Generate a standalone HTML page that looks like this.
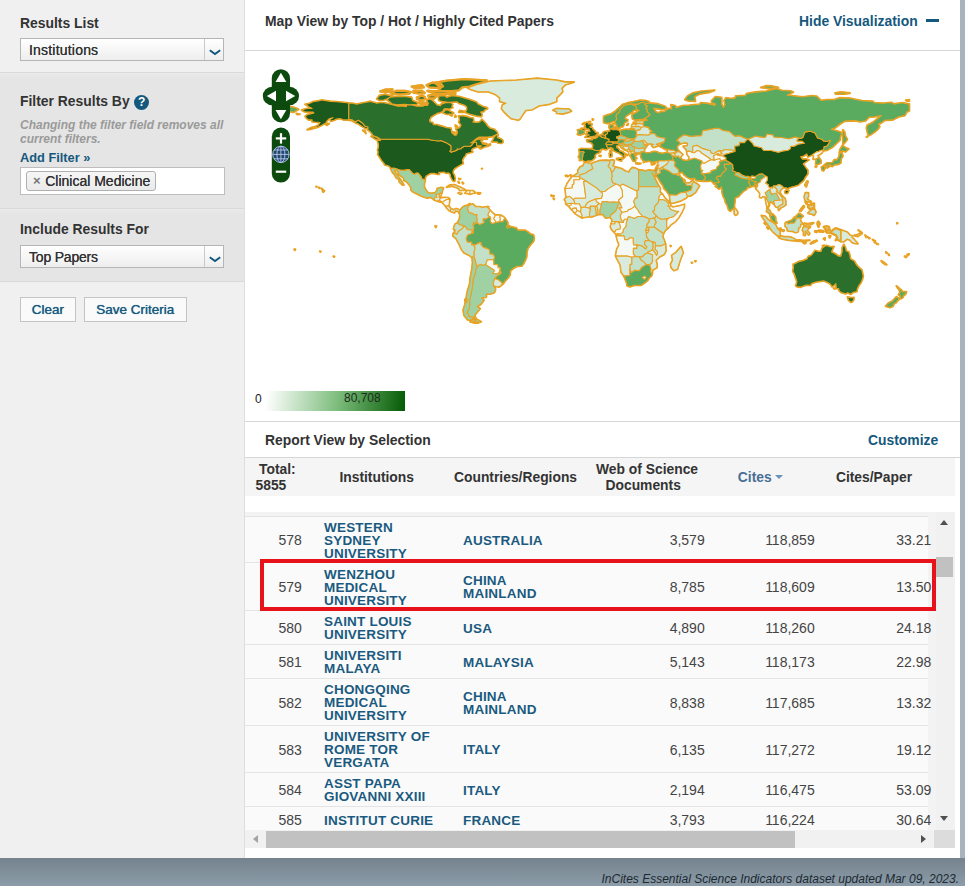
<!DOCTYPE html>
<html><head><meta charset="utf-8"><title>InCites Essential Science Indicators</title>
<style>
*{box-sizing:border-box;margin:0;padding:0}
html,body{width:965px;height:886px;overflow:hidden}
body{position:relative;font-family:"Liberation Sans",sans-serif;color:#333;background:linear-gradient(#74838e,#8c9ca8) 0 858px/965px 28px no-repeat,#a9b3bb;font-size:14px}
.abs{position:absolute}
#side{left:0;top:0;width:245px;height:858px;background:#f0f0f0;border-right:1px solid #dedede}
#main{left:245px;top:0;width:715px;height:858px;background:#fff}
.sec{left:0;width:244px;background:linear-gradient(#eaeaea,#e5e5e5 6px);border-top:1px solid #d9d9d9;border-bottom:1px solid #d9d9d9}
.h{font-weight:bold;font-size:13.9px;line-height:16px;color:#333;white-space:nowrap}
.sel{left:20px;width:204px;height:23px;border:1px solid #b5b5b5;background:linear-gradient(#fff,#eee);font-size:14px;line-height:23px;padding-left:8px;font-weight:normal;color:#333;text-shadow:0 0 0.4px #333}
.sel i{position:absolute;right:0;top:0;width:19px;height:21px;border-left:1px solid #c9c9c9}
.sel svg{position:absolute;left:3.5px;top:9.5px}
.btn{height:25px;border:1px solid #c4c4c4;background:#fafafa;color:#1a5a80;font-size:13.5px;line-height:24px;text-align:center;text-shadow:0 0 0.7px #1a5a80}
.blue{color:#15587e}
.hl{left:0;height:1px;background:#d6d6d6}
th,td{font-weight:normal}
.row{left:0;width:683px;border-bottom:1px solid #e4e4e4;background:#fafafa}
.row div{position:absolute;white-space:nowrap}
.th{font-weight:bold;font-size:13.85px;line-height:16px;color:#333;white-space:nowrap}
.num{font-size:14px;color:#444}
.lnk{font-weight:bold;font-size:13.5px;line-height:13px;color:#1a5a80;letter-spacing:0.2px}
</style></head><body>
<div id="side" class="abs">
 <div class="abs h" style="left:20px;top:14.5px">Results List</div>
 <div class="abs sel" style="top:38px;letter-spacing:0.2px">Institutions<i><svg width="12" height="7" viewBox="0 0 12 7"><path d="M0.8 1.2 L6 5 L11.2 1.2" fill="none" stroke="#15587e" stroke-width="2"/></svg></i></div>
 <div class="abs sec" style="top:72px;height:137px"></div>
 <div class="abs h" style="left:20px;top:93px">Filter Results By</div>
 <div class="abs" style="left:134px;top:95px;width:15.4px;height:15.4px;border-radius:50%;background:#15587e;color:#fff;font-weight:bold;font-size:12px;line-height:15px;text-align:center">?</div>
 <div class="abs" style="left:20px;top:118px;font-style:italic;font-size:12px;line-height:14px;color:#9a9a9a;white-space:nowrap;font-weight:bold">Changing the filter field removes all<br>current filters.</div>
 <div class="abs blue" style="left:20px;top:149.5px;font-weight:bold;font-size:12.8px;white-space:nowrap">Add Filter »</div>
 <div class="abs" style="left:20px;top:166.5px;width:205px;height:28px;background:#fff;border:1px solid #bdbdbd"></div>
 <div class="abs" style="left:26px;top:170.5px;width:129.5px;height:20px;border:1px solid #b0b0b0;border-radius:3px;background:linear-gradient(#f6f6f6,#eaeaea);font-size:14px;line-height:18px;white-space:nowrap;text-shadow:0 0 0.4px #333"><span class="abs" style="left:6px;top:0;color:#777;font-weight:bold;font-size:13px;text-shadow:none">×</span><span class="abs" style="left:18.2px;top:0">Clinical Medicine</span></div>
 <div class="abs sec" style="top:208px;height:74px"></div>
 <div class="abs h" style="left:20px;top:221px">Include Results For</div>
 <div class="abs sel" style="top:245px;letter-spacing:-0.2px">Top Papers<i><svg width="12" height="7" viewBox="0 0 12 7"><path d="M0.8 1.2 L6 5 L11.2 1.2" fill="none" stroke="#15587e" stroke-width="2"/></svg></i></div>
 <div class="abs btn" style="left:20px;top:297px;width:56px">Clear</div>
 <div class="abs btn" style="left:84px;top:297px;width:102.5px">Save Criteria</div>
</div>
<div id="main" class="abs">
 <div class="abs h" style="left:20px;top:13px">Map View by Top / Hot / Highly Cited Papers</div>
 <div class="abs h blue" style="left:554px;top:13px">Hide Visualization</div>
 <div class="abs" style="left:681px;top:18.5px;width:13px;height:3.5px;background:#15587e"></div>
 <div class="abs hl" style="top:50px;width:715px"></div>
 <!--MAP-->
<svg class="abs" style="left:0;top:51px" width="715" height="340" viewBox="0 0 715 340">
<path fill="none" stroke="#eba21f" stroke-width="2.1" stroke-linejoin="round" d="M327.0,125.7 334.8,125.7 334.8,124.0 340.4,122.2 343.7,119.9 347.9,117.8 346.9,114.7 346.2,112.7 340.7,111.5 339.5,111.7 338.1,114.7 335.2,115.9 332.9,119.1 333.1,121.7 329.9,124.3ZM320.1,137.7 327.3,137.0 327.3,134.0 329.0,133.1 329.0,128.7 334.8,128.7 334.8,125.7 327.0,125.7 324.2,129.6 322.1,132.8ZM334.8,125.7 334.8,126.5 341.6,130.5 352.1,137.4 355.8,141.1 357.3,140.7 360.5,140.2 363.1,137.9 371.0,133.1 367.5,131.4 366.6,127.9 367.3,125.2 366.6,121.3 365.7,118.2 363.1,115.0 364.5,112.9 365.0,109.6 360.5,109.4 355.2,109.6 350.0,111.3 346.2,112.7 346.9,114.7 347.9,117.8 343.7,119.9 340.4,122.2 334.8,124.0ZM365.0,109.6 364.5,112.9 363.1,115.0 365.7,118.2 366.6,121.3 367.8,120.8 370.1,117.3 370.3,116.1 367.8,114.7 368.9,112.0 369.2,109.4 367.1,108.9ZM366.6,121.3 367.3,125.2 366.6,127.9 367.5,131.4 371.0,133.1 374.8,134.7 377.9,133.3 391.9,140.2 391.9,139.3 393.6,139.3 393.6,135.8 393.6,118.9 390.2,117.1 387.5,116.6 384.9,119.1 384.0,121.2 380.6,120.3 376.7,117.7 372.7,116.6 370.3,116.1 370.1,117.3 367.8,120.8ZM393.6,118.9 393.6,135.8 405.0,135.8 414.4,135.8 412.3,132.4 409.7,127.0 406.9,121.9 409.7,125.7 410.9,122.6 409.9,119.4 406.4,119.6 404.1,118.9 400.6,120.1 397.1,119.2ZM393.6,135.8 414.4,135.8 415.3,137.5 415.0,141.1 417.2,142.8 414.6,144.6 413.7,148.1 413.7,149.3 413.0,152.1 411.3,153.7 409.5,156.0 409.5,159.5 407.6,160.4 411.6,165.0 409.4,167.1 404.1,168.0 401.5,166.6 397.8,165.5 394.0,161.3 392.8,159.0 391.0,156.9 389.8,155.1 389.3,152.0 388.4,150.7 390.2,146.9 391.9,146.9 391.9,140.2 391.9,139.3 393.6,139.3ZM413.7,148.1 414.6,144.6 417.2,142.8 419.8,147.0 425.3,152.1 424.0,152.7 419.8,149.2 416.2,148.5 413.7,149.3ZM413.7,149.3 416.2,148.5 419.8,149.2 424.0,152.7 423.0,155.1 424.9,155.3 425.1,157.8 426.8,158.7 432.1,160.4 433.8,160.4 428.6,165.7 423.3,167.3 421.6,167.6 419.0,168.3 416.3,168.2 412.9,166.8 411.6,165.0 407.6,160.4 409.5,159.5 409.5,156.0 411.3,153.7 413.0,152.1ZM423.0,155.1 424.0,152.7 425.3,152.1 425.6,154.3 424.9,155.3ZM424.9,155.3 425.6,154.3 427.7,156.2 431.2,155.5 435.6,154.6 439.4,153.4 439.2,156.2 437.3,160.4 433.8,166.6 430.3,170.6 426.0,173.6 422.6,177.5 421.6,175.9 421.6,169.6 423.3,167.3 428.6,165.7 433.8,160.4 432.1,160.4 426.8,158.7 425.1,157.8ZM409.4,167.1 411.6,165.0 412.9,166.8 416.3,168.2 419.0,168.3 421.6,167.6 421.6,169.6 421.6,175.9 422.6,177.5 420.2,179.4 418.4,182.8 415.8,180.7 409.4,176.3 409.4,174.1 411.1,171.5ZM404.1,168.0 409.4,167.1 411.1,171.5 409.4,174.1 409.4,176.3 403.3,176.3 401.7,177.0 401.9,173.4 404.1,170.6ZM403.3,176.3 409.4,176.3 415.8,180.7 418.4,182.8 417.7,185.9 419.0,188.6 420.5,193.0 415.5,195.1 410.6,194.7 410.1,191.6 407.3,190.9 404.1,189.6 401.5,185.9 401.3,182.2 403.3,180.7 403.8,178.7ZM400.5,178.7 401.7,177.0 403.3,176.3 403.8,178.7 402.2,179.4ZM400.6,179.4 402.2,179.4 403.8,178.7 403.3,180.7 401.3,182.2ZM371.3,184.9 372.7,182.6 375.1,183.1 377.8,181.4 378.3,178.4 380.9,175.4 381.4,171.0 382.5,168.3 382.5,166.8 384.0,165.5 389.3,167.3 392.8,165.5 397.8,165.5 401.5,166.6 404.1,168.0 404.1,170.6 401.9,173.4 401.7,177.0 400.5,178.7 400.6,179.4 401.3,182.2 401.5,185.9 404.1,189.6 400.5,189.5 399.6,190.9 399.9,193.9 402.0,195.8 400.6,198.1 397.5,195.3 394.2,194.2 392.6,194.6 391.9,193.7 388.8,194.2 388.1,191.2 388.2,187.3 384.9,186.8 383.2,188.6 379.7,188.6 379.0,184.9 372.7,184.9ZM369.4,181.4 371.0,183.3 372.7,182.6 375.1,183.1 377.8,181.4 378.3,178.4 380.9,175.4 381.4,171.0 382.5,168.3 379.2,168.3 378.3,171.5 373.0,170.6 374.3,172.4 375.3,175.6 375.1,177.8 371.8,178.5 371.0,178.7ZM366.2,172.7 369.7,172.7 369.7,170.5 373.0,170.6 374.3,172.4 375.3,175.6 375.1,177.8 371.8,178.5 371.0,178.7 369.4,181.4 366.8,178.7 365.4,175.7ZM366.2,172.7 367.1,170.5 369.7,170.5 369.7,172.7ZM364.8,166.2 366.9,168.3 367.1,170.5 373.0,170.6 378.1,171.5 376.2,168.3 375.3,164.8 377.1,161.3 374.1,156.9 377.1,156.9 374.8,151.6 373.0,154.3 371.0,159.4 368.3,162.2 366.2,163.2ZM376.2,168.3 375.3,164.8 377.1,161.3 382.5,160.2 383.2,158.7 386.7,157.4 389.8,155.1 391.0,156.9 392.8,159.0 394.0,161.3 397.8,165.5 392.8,165.5 389.3,167.3 384.0,165.5 382.5,166.8 382.5,168.3 379.2,168.3 378.1,171.5ZM374.8,151.6 377.1,156.9 374.1,156.9 377.1,161.3 382.5,160.2 383.2,158.7 386.7,157.4 389.8,155.1 389.3,152.0 388.4,150.7 390.2,146.9 391.9,146.9 391.9,140.2 377.9,133.3 374.8,134.7 376.2,137.5 377.1,139.3 377.6,145.5 373.6,149.0 373.7,150.7ZM350.3,148.1 352.3,147.6 356.1,147.4 357.3,144.9 357.3,140.7 360.5,140.2 363.1,137.9 371.0,133.1 374.8,134.7 376.2,137.5 377.1,139.3 377.6,145.5 373.6,149.0 373.7,150.7 371.8,151.4 368.3,151.1 364.0,151.3 361.3,150.6 357.3,150.6 356.3,153.9 354.9,152.9 353.8,152.3 351.6,150.7ZM354.7,163.2 354.9,158.7 356.3,153.9 357.3,150.6 361.3,150.6 364.0,151.3 368.3,151.1 371.8,151.4 373.7,150.7 374.8,151.6 373.0,154.3 371.0,159.4 368.3,162.2 366.2,163.2 364.8,166.2 362.2,166.8 360.5,166.9 357.9,163.4ZM352.8,163.6 354.7,163.2 354.9,158.7 356.3,153.9 354.9,152.9 353.8,152.3 351.6,155.1 352.8,158.7ZM352.1,163.8 352.8,163.6 352.8,158.7 351.6,155.1 349.8,155.0 350.9,159.5 351.0,162.4ZM344.6,165.5 346.5,166.1 352.1,163.8 351.0,162.4 350.9,159.5 349.8,155.0 345.1,155.1 345.3,157.8 344.4,162.5ZM340.4,156.2 345.1,157.4 345.1,155.1 349.8,155.0 351.6,155.1 353.8,152.3 351.6,150.7 350.3,148.1 346.5,149.5 342.7,151.3 340.7,153.7ZM336.9,166.8 344.6,165.5 344.4,162.5 345.3,157.8 345.1,157.4 340.4,156.2 339.2,155.8 336.0,156.5 335.5,161.1 336.9,164.3ZM329.9,162.4 336.9,166.8 336.9,164.3 335.5,161.1 333.6,159.7 332.0,159.5ZM326.8,158.7 329.9,162.4 332.0,159.5 331.3,156.9 328.2,157.1ZM323.8,155.3 326.8,158.7 328.2,157.1 331.3,156.9 332.0,159.5 333.6,159.7 335.5,161.1 336.0,156.5 335.5,155.1 334.3,152.7 330.1,152.7 326.1,152.3 326.1,153.9ZM320.8,152.9 323.8,155.3 326.1,153.9 326.1,152.3ZM320.8,152.9 326.1,152.3 330.1,152.7 328.7,148.6 324.7,145.3 321.2,146.3 319.4,148.6 320.8,150.6ZM320.1,137.7 321.2,146.3 324.7,145.3 328.7,148.6 329.9,147.2 340.4,147.2 340.7,145.8 338.7,130.5 341.6,130.5 334.8,126.5 334.8,128.7 329.0,128.7 329.0,133.1 327.3,134.0 327.3,137.0ZM328.7,148.6 330.1,152.7 334.3,152.7 335.5,155.1 336.0,156.5 339.2,155.8 340.4,156.2 340.7,153.7 342.7,151.3 346.5,149.5 350.3,148.1 352.3,147.6 356.1,147.4 357.3,144.9 357.3,140.7 355.8,141.1 352.1,137.4 341.6,130.5 338.7,130.5 340.7,145.8 340.4,147.2 329.9,147.2ZM371.3,184.9 372.7,184.9 379.0,184.9 379.7,188.6 383.2,188.6 384.9,186.8 388.2,187.3 388.1,191.2 388.8,194.2 391.9,193.7 391.9,197.4 388.4,197.4 388.4,203.0 390.9,205.5 386.7,206.2 382.3,205.1 374.4,205.1 370.6,204.9 371.8,198.3 374.1,193.9 372.7,190.3ZM388.4,197.4 391.9,197.4 391.9,193.7 392.6,194.6 394.2,194.2 397.5,195.3 400.6,198.1 402.0,195.8 399.9,193.9 399.6,190.9 400.5,189.5 404.1,189.6 407.3,190.9 408.1,193.5 408.1,196.5 407.1,198.4 408.0,199.1 402.7,200.9 403.1,202.0 400.5,202.7 397.1,206.0 394.2,205.8 390.9,205.5 388.4,203.0ZM407.3,190.9 410.1,191.6 410.6,194.7 410.2,198.3 412.5,200.2 412.5,203.0 411.5,204.4 409.9,201.8 408.0,199.1 407.1,198.4 408.1,196.5 408.1,193.5ZM420.5,193.0 420.9,200.0 419.0,203.5 414.6,205.8 410.9,209.3 412.0,213.2 411.8,216.7 407.6,219.0 407.4,221.7 405.9,221.7 405.7,219.9 405.9,217.6 404.6,213.9 406.7,212.0 407.6,209.3 407.3,206.2 407.6,203.9 403.1,202.0 402.7,200.9 408.0,199.1 409.9,201.8 411.5,204.4 412.5,203.0 412.5,200.2 410.2,198.3 410.6,194.7 415.5,195.1ZM394.2,205.8 397.1,206.0 400.5,202.7 403.1,202.0 407.6,203.9 407.3,206.2 407.6,209.3 406.7,212.0 404.6,213.9 401.3,213.6 398.4,210.6 395.7,208.8ZM384.9,213.2 384.9,218.1 386.3,221.7 389.6,219.4 394.5,219.7 397.1,216.2 401.3,213.6 398.4,210.6 395.7,208.8 394.2,205.8 390.9,205.5 386.7,206.2 386.7,213.2ZM370.6,204.9 374.4,205.1 382.3,205.1 386.7,206.2 386.7,213.2 384.9,213.2 384.9,218.1 384.9,224.5 380.6,225.0 378.8,224.8 376.2,221.1 375.3,214.1 371.8,207.6ZM378.8,224.8 380.6,225.0 384.9,224.5 384.9,218.1 386.3,221.7 389.6,219.4 394.5,219.7 397.1,216.2 401.3,213.6 404.6,213.9 405.9,217.6 405.7,219.9 405.9,221.7 407.4,221.7 406.6,224.7 404.1,227.1 402.4,229.6 399.2,232.2 396.3,234.0 394.5,234.3 389.3,234.3 384.9,235.7 382.1,234.7 381.8,232.1 380.2,228.2ZM397.1,226.6 399.8,225.0 401.3,226.4 399.4,228.4ZM436.1,195.6 438.2,201.8 437.0,204.4 434.7,210.6 432.4,218.3 428.9,219.4 426.3,216.7 425.6,213.2 427.7,209.3 426.8,204.4 430.3,202.1 433.8,198.3ZM307.6,144.9 309.0,144.8 308.4,145.6ZM308.4,147.7 309.3,147.7 309.0,148.3ZM306.0,144.4 306.5,144.4 306.4,144.9ZM425.4,194.6 426.0,194.9 425.6,195.4ZM450.0,209.9 450.9,210.1 450.4,210.6ZM446.6,211.5 447.4,211.6 446.9,212.0ZM435.6,92.8 433.8,90.5 431.7,89.5 432.1,89.1 434.7,86.5 439.0,83.7 446.0,85.4 452.1,84.7 456.5,84.7 457.4,79.8 463.5,78.6 470.5,77.2 474.0,77.3 478.3,79.5 484.4,80.3 489.7,85.1 494.9,84.7 498.4,86.5 502.4,88.1 499.3,91.8 494.9,91.4 494.0,94.8 489.7,95.3 490.2,100.2 487.9,99.2 479.2,98.5 478.3,99.9 474.0,99.7 470.5,101.6 468.7,102.7 466.1,102.0 465.2,99.7 458.3,97.9 452.1,94.4 447.8,95.3 447.8,101.8 444.3,100.1 441.7,100.9 441.7,99.2 439.0,96.2 438.2,95.3 442.5,94.8 442.5,92.1 439.0,91.8ZM447.8,101.8 447.8,95.3 452.1,94.4 458.3,97.9 465.2,99.7 466.1,102.0 468.7,102.7 470.5,101.6 474.0,99.7 477.5,102.7 474.0,103.7 473.1,102.5 470.0,104.1 468.4,105.3 469.3,107.6 467.9,109.0 466.1,108.7 462.6,106.0 458.3,103.2 456.5,102.0 454.8,100.2 452.1,99.5 449.5,101.8ZM441.7,100.9 444.3,100.1 447.8,101.8 449.5,101.8 452.1,99.5 454.8,100.2 456.5,102.0 458.3,103.2 462.6,106.0 466.1,108.7 462.6,110.6 459.1,112.4 456.9,111.8 456.9,110.1 453.0,108.5 449.5,107.3 444.3,108.9 444.1,105.9 442.5,104.1ZM472.2,104.1 478.3,105.2 479.2,103.6 484.1,102.3 490.0,100.4 487.9,99.2 479.2,98.5 478.3,99.9 474.0,99.7 477.5,102.7 474.0,103.7ZM467.9,109.0 469.3,107.6 468.4,105.3 470.0,104.1 473.1,102.5 472.2,104.1 478.3,105.2 481.0,106.7 480.8,108.9 475.7,109.7 474.8,107.8 472.2,108.3 468.7,109.4ZM412.7,111.3 414.1,109.7 416.3,109.7 419.8,109.7 424.0,109.2 421.9,113.3 417.7,115.9 414.3,117.7 412.5,116.6 412.9,113.6ZM424.0,109.2 428.2,109.0 430.3,111.5 429.4,114.7 433.5,118.5 433.8,121.7 434.7,121.9 431.2,123.3 428.0,123.1 423.3,119.8 418.4,117.8 417.7,115.9 421.9,113.3ZM428.2,104.6 430.7,106.0 433.8,104.8 435.4,106.9 437.3,108.7 440.8,109.7 444.3,108.9 449.5,107.3 453.0,108.5 456.9,110.1 456.9,111.8 455.6,114.7 456.2,119.1 457.9,119.2 456.3,122.1 459.6,124.9 460.5,126.6 460.3,127.7 457.6,130.1 451.3,129.4 449.5,127.0 445.2,127.7 441.7,125.9 438.7,123.5 437.3,121.3 434.7,121.9 433.8,121.7 433.5,118.5 429.4,114.7 430.3,111.5 428.2,109.0 427.3,106.9ZM411.1,122.8 412.9,123.1 415.5,121.7 414.6,119.1 418.4,117.8 423.3,119.8 428.0,123.1 431.2,123.3 432.9,124.3 434.5,124.3 435.6,126.1 437.6,127.5 438.7,130.9 440.1,131.7 441.8,134.2 446.4,134.5 447.3,135.8 446.0,139.3 440.8,141.1 435.6,141.8 434.2,142.5 431.2,144.2 426.8,143.9 425.6,143.7 424.7,145.6 424.2,143.7 421.6,140.2 419.0,137.5 418.1,134.9 416.3,132.3 415.0,130.5 413.7,127.9 411.5,125.2ZM431.2,123.3 433.8,121.7 434.5,124.3 432.9,124.3ZM438.7,130.9 439.4,128.6 440.1,130.1 440.1,131.2ZM424.7,145.6 425.6,143.7 426.8,143.9 431.2,144.2 434.2,142.5 435.6,141.8 440.8,141.1 442.5,145.3 441.1,147.0 435.6,149.9 428.6,152.0 426.0,152.1 425.4,151.1ZM440.8,141.1 446.0,139.3 447.3,135.8 446.4,134.5 447.8,131.9 448.3,130.7 452.3,133.0 454.4,134.9 452.1,138.6 450.7,141.1 448.6,142.8 446.0,144.6 442.5,145.3ZM440.1,131.7 441.8,134.2 446.4,134.5 447.8,131.9 448.3,130.7 448.0,128.7 445.2,131.7 444.3,132.1ZM411.1,122.8 412.9,123.1 415.5,121.7 414.6,119.1 418.4,117.8 417.7,115.9 414.3,117.7 412.5,116.6 412.2,116.9 412.0,119.1ZM409.9,119.4 410.9,122.6 412.0,119.1 412.2,116.9 412.2,116.1 411.3,116.2ZM411.3,116.2 412.2,116.1 413.9,114.3 412.9,113.6ZM456.9,111.8 459.1,112.4 462.6,110.6 466.1,108.7 467.9,109.0 468.7,109.4 472.2,108.3 474.8,107.8 475.7,109.7 480.8,108.9 478.3,109.6 474.3,111.1 474.8,113.8 472.2,115.9 471.0,118.4 466.1,119.9 465.8,121.9 459.1,122.8 456.3,122.1 457.9,119.2 456.2,119.1 455.6,114.7ZM457.6,130.1 460.3,127.7 460.5,126.6 459.6,124.9 456.3,122.1 459.1,122.8 465.8,121.9 466.1,119.9 471.0,118.4 472.2,115.9 474.8,113.8 474.3,111.1 478.3,109.6 480.8,108.9 481.8,109.7 485.8,112.0 484.1,113.4 479.2,113.4 479.9,116.8 481.5,117.7 480.1,119.9 477.5,121.9 475.5,125.4 472.7,125.2 471.3,127.0 473.6,129.3 474.0,131.6 470.1,131.7 469.1,132.8 467.5,131.0 466.1,129.8 462.6,130.1ZM469.1,132.8 470.1,131.7 474.0,131.6 473.6,129.3 471.3,127.0 472.7,125.2 475.5,125.4 477.5,121.9 480.1,119.9 481.5,117.7 479.9,116.8 479.2,113.4 484.1,113.4 485.8,112.0 487.9,114.1 487.8,116.4 488.5,117.3 487.4,119.4 491.4,121.3 490.0,123.8 494.9,126.3 498.4,127.5 503.8,128.0 503.8,125.4 505.2,126.5 506.8,127.5 510.6,127.2 510.1,125.6 514.1,123.1 517.6,122.8 519.9,124.7 519.4,126.6 516.2,128.4 515.2,131.0 512.9,132.3 512.7,135.4 511.7,136.0 511.3,133.1 509.8,134.0 509.2,132.3 511.3,130.5 506.8,130.0 506.8,128.7 504.9,128.0 503.8,131.4 505.2,133.7 505.4,136.1 501.9,136.8 501.6,138.4 498.4,140.2 495.4,143.3 493.5,145.5 490.2,146.7 489.9,150.7 489.3,154.3 489.3,156.4 487.9,158.1 486.5,158.8 485.3,160.2 483.6,158.7 482.3,154.3 480.6,151.6 479.7,148.1 478.3,145.5 477.1,141.1 477.1,137.5 476.1,137.2 476.6,135.8 474.0,137.9 470.5,135.3 472.2,134.4ZM490.0,123.8 491.4,121.3 494.0,121.7 496.7,123.8 500.2,125.2 503.8,125.4 503.8,128.0 498.4,127.5 494.9,126.3ZM505.2,126.5 506.8,124.9 510.1,125.6 510.6,127.2 506.8,127.5ZM503.8,131.4 504.9,128.0 506.8,128.7 506.8,130.0 511.3,130.5 509.2,132.3 509.8,134.0 511.3,133.1 511.7,137.0 511.2,138.1 510.3,135.3 508.0,134.9 505.4,136.1 505.2,133.7ZM489.3,157.6 490.2,157.4 492.8,161.3 492.3,163.2 490.6,164.1 489.5,163.1 489.3,160.4ZM478.5,105.2 479.2,103.6 484.1,102.3 490.0,100.4 490.2,100.2 489.7,95.3 494.0,94.8 494.9,91.4 499.3,91.8 502.4,88.1 503.3,88.1 508.0,92.7 508.9,94.8 516.7,96.7 518.5,99.3 526.3,99.5 533.3,101.3 537.7,99.9 542.9,99.3 545.4,97.6 545.6,95.3 549.0,95.3 553.4,93.0 559.3,92.3 556.9,90.2 552.5,90.4 551.7,89.7 553.8,86.9 555.7,87.4 557.8,86.5 559.5,82.1 560.4,80.9 565.6,80.3 570.0,82.1 572.6,86.9 577.0,88.3 578.4,90.0 581.3,90.5 585.7,89.3 582.2,95.1 579.2,95.7 578.7,98.8 578.2,100.1 577.3,99.0 573.5,100.6 571.6,100.9 567.2,103.9 563.0,105.9 561.8,102.9 558.6,105.0 555.7,105.9 557.6,108.3 560.9,108.0 563.9,108.9 560.4,111.1 558.1,112.9 560.9,116.8 562.8,119.1 562.7,121.7 562.8,122.9 560.4,126.1 558.6,129.4 556.0,131.6 553.4,134.0 549.4,135.3 546.4,136.1 542.9,137.2 542.6,138.8 541.5,136.7 538.6,136.7 536.3,134.4 533.9,133.5 531.2,134.7 528.4,135.1 527.7,137.2 526.5,136.3 524.6,136.5 523.2,135.6 523.4,133.8 520.4,132.3 522.3,128.9 522.2,125.9 519.9,124.7 517.6,122.8 514.1,123.1 510.1,125.6 506.8,124.9 505.2,126.5 503.8,125.4 500.2,125.2 496.7,123.8 494.0,121.7 491.4,121.3 487.4,119.4 488.5,117.3 487.8,116.4 487.9,114.1 485.8,112.0 481.8,109.7 480.8,108.9 481.0,106.7ZM539.8,140.7 541.2,139.1 543.8,139.5 542.6,142.1 540.3,142.3ZM559.9,134.0 562.1,130.1 563.0,130.5 561.3,135.8ZM503.3,88.1 510.6,85.1 520.2,86.5 522.0,83.0 528.1,84.0 529.0,86.0 536.8,86.5 543.8,87.7 549.9,86.1 553.8,86.9 551.7,89.7 552.5,90.4 556.9,90.2 559.3,92.3 553.4,93.0 549.0,95.3 545.6,95.3 545.4,97.6 542.9,99.3 537.7,99.9 533.3,101.3 526.3,99.5 518.5,99.3 516.7,96.7 508.9,94.8 508.0,92.7ZM567.2,103.9 571.6,100.9 573.5,100.6 577.3,99.0 578.2,100.1 576.5,102.3 572.6,104.6 574.0,106.6 571.2,108.0 568.2,108.1 568.8,105.0ZM571.2,108.0 574.0,106.6 575.9,109.4 575.9,112.0 573.5,113.1 570.9,114.0 570.7,112.0 571.2,109.4ZM570.3,115.7 571.6,115.5 570.9,116.1ZM578.6,114.7 580.5,113.1 582.2,112.0 587.5,111.7 589.2,108.9 591.8,108.9 593.6,106.7 594.4,104.1 594.4,102.7 596.7,101.6 597.9,105.0 596.2,107.6 595.8,110.3 595.8,111.8 594.1,112.9 592.2,113.4 589.2,113.6 588.9,114.1 587.1,115.5 585.7,113.8 582.2,114.1 580.5,115.0ZM594.4,101.5 595.0,98.5 597.4,94.6 600.6,96.7 603.7,97.9 600.6,100.6 597.1,99.9ZM576.5,116.1 578.7,114.8 580.3,116.8 578.7,119.6 577.3,119.4ZM580.8,115.5 584.0,114.1 584.8,115.2 582.2,116.8ZM511.2,138.1 511.7,137.0 511.7,136.0 512.7,135.4 512.9,132.3 515.2,131.0 516.2,128.4 519.4,126.6 519.9,124.7 522.2,125.9 522.3,128.9 520.4,132.3 523.4,133.8 523.2,135.6 524.6,136.5 526.5,136.3 524.8,138.6 522.7,139.8 520.2,141.9 521.5,144.6 522.2,146.0 521.5,147.7 523.0,150.7 523.9,153.7 522.2,156.9 521.5,153.4 520.6,149.0 520.4,145.8 518.0,145.5 516.4,146.7 514.6,146.3 515.0,142.8 513.4,140.2ZM520.2,141.9 522.7,139.8 524.8,138.6 525.5,140.2 526.7,143.7 528.3,142.5 531.6,142.3 533.0,145.5 534.2,147.2 534.2,149.2 529.8,149.5 528.8,150.7 529.7,153.9 527.7,152.1 526.2,150.9 524.6,150.9 524.4,154.3 523.2,156.4 523.2,158.3 525.1,159.9 525.5,161.8 527.7,163.1 528.3,163.6 526.5,164.5 524.9,163.1 524.1,162.4 521.6,160.4 522.2,156.9 523.9,153.7 523.0,150.7 521.5,147.7 522.2,146.0 521.5,144.6ZM524.8,138.6 526.5,136.3 527.7,137.2 528.4,135.1 529.7,136.3 531.6,137.7 532.6,140.0 531.4,140.5 533.7,141.9 535.9,144.6 537.9,147.6 537.7,148.8 535.1,149.2 534.2,149.2 534.2,147.2 533.0,145.5 531.6,142.3 528.3,142.5 526.7,143.7 525.5,140.2ZM528.4,135.1 531.2,134.7 533.9,133.5 536.3,134.4 538.6,136.7 536.3,138.2 534.7,141.1 535.9,143.3 537.3,144.9 540.0,147.6 540.8,150.7 540.7,153.9 537.7,156.0 536.5,156.2 533.7,159.2 533.2,156.7 532.5,156.2 535.1,154.3 537.7,152.9 537.7,148.8 537.9,147.6 535.9,144.6 533.7,141.9 531.4,140.5 532.6,140.0 531.6,137.7 529.7,136.3ZM528.8,150.7 529.8,149.5 534.2,149.2 535.1,149.2 537.7,148.8 537.7,152.9 535.1,154.3 532.5,156.2 530.7,155.8 529.7,153.9ZM524.9,163.1 526.5,164.5 528.3,163.6 530.5,166.1 530.7,169.6 531.9,172.0 530.7,172.2 526.9,169.4 525.8,167.1 525.1,164.8ZM541.4,171.2 542.9,172.9 545.9,172.0 548.9,172.2 550.4,170.5 551.8,167.1 555.2,167.1 556.0,166.9 558.1,165.2 555.5,163.2 553.9,162.4 551.7,164.8 549.0,166.6 547.3,168.9 544.3,170.1ZM540.3,174.0 540.3,171.9 541.4,171.2 542.9,172.9 545.9,172.0 548.9,172.2 550.4,170.5 551.8,167.1 555.2,167.1 556.0,166.9 555.3,168.3 556.0,170.6 557.8,172.7 555.7,173.1 555.2,175.9 553.4,177.1 553.4,179.8 552.5,181.2 550.1,181.5 547.3,180.1 545.0,180.3 542.4,179.6 542.1,177.1 540.3,175.4ZM516.4,164.6 520.2,165.3 522.3,167.8 525.1,170.1 527.6,171.3 530.5,173.6 532.5,177.7 535.1,179.8 534.9,184.7 532.6,184.9 528.6,181.5 526.3,178.9 523.2,174.1 519.7,169.6ZM533.7,186.5 536.3,185.1 539.4,185.9 543.5,185.8 546.8,186.6 549.9,188.1 549.7,189.8 543.8,189.1 538.6,188.2 535.8,187.5ZM559.5,172.2 563.0,172.7 567.9,171.7 568.6,172.0 565.3,173.8 560.9,173.8 559.5,175.9 561.8,176.3 565.3,176.1 563.0,178.0 562.1,179.4 564.8,182.4 563.5,184.0 561.8,181.5 560.2,179.8 560.2,184.4 558.6,184.2 558.6,180.7 557.4,179.4 559.0,174.9 559.2,173.1ZM550.8,189.3 554.3,189.1 557.8,189.5 564.8,189.3 559.5,190.2 554.3,190.3 550.8,190.0ZM565.6,192.6 568.2,190.7 568.2,191.7ZM557.8,191.2 560.9,191.6 559.5,192.5ZM572.6,171.3 573.5,170.6 574.7,172.7 573.5,175.9 572.6,173.6ZM570.0,180.1 572.1,180.1 571.7,181.2 570.0,180.8ZM573.5,179.6 577.9,179.8 578.4,180.8 574.4,180.7ZM584.3,184.7 585.4,185.1 584.7,186.5ZM578.7,187.7 579.9,187.2 579.8,188.6ZM578.7,175.9 581.3,175.2 584.0,175.9 584.5,178.9 586.6,180.3 589.2,178.0 590.9,177.3 596.2,179.1 596.2,190.5 592.7,188.8 590.6,189.3 592.3,186.8 590.9,184.2 586.6,182.2 583.1,181.2 581.9,181.7 580.5,179.6 583.1,178.7 580.5,178.0ZM534.2,177.7 535.9,177.5 535.9,179.8 535.1,179.4ZM537.9,179.1 539.1,179.4 538.2,180.1ZM519.4,172.0 520.9,173.4 520.1,172.7ZM522.2,176.3 523.4,177.7 522.7,177.3ZM568.2,190.7 571.7,189.3 572.1,189.8 568.2,191.7ZM549.0,166.6 550.8,165.7 551.3,166.8 550.1,167.3ZM596.2,179.1 602.3,181.2 604.9,184.2 607.5,185.1 607.0,186.5 609.3,188.6 612.8,192.6 610.2,192.5 606.7,191.2 604.9,188.9 602.3,187.9 600.6,189.1 598.8,190.7 596.2,190.5ZM609.3,184.4 611.9,184.2 615.4,181.9 615.7,183.3 612.8,185.4ZM613.3,179.1 616.8,181.5 617.1,182.6 615.4,180.8ZM620.1,184.2 622.0,185.9 621.2,186.3ZM560.4,141.9 563.4,141.9 563.4,145.5 562.1,148.1 566.2,150.7 566.5,152.3 563.9,150.7 560.9,150.2 559.9,148.5 559.3,145.8ZM563.0,162.2 565.6,159.4 569.1,157.3 570.9,161.3 569.1,164.3 566.5,163.1ZM563.0,153.7 565.6,154.3 569.1,152.5 569.1,156.4 564.8,158.1 563.0,156.0ZM554.8,159.9 558.6,154.8 559.2,155.5 555.7,160.1ZM560.4,150.7 562.1,150.9 561.6,152.9ZM403.8,52.0 407.6,52.4 412.9,52.9 419.8,55.2 421.6,56.9 419.8,58.0 416.3,58.2 408.5,57.1 410.8,61.0 414.6,62.0 415.5,60.5 419.8,60.8 420.7,59.2 424.2,57.6 426.8,58.0 426.0,53.9 430.3,54.8 431.2,56.8 437.3,54.8 444.3,54.3 449.5,53.8 454.8,53.4 455.6,51.7 461.7,52.4 467.0,53.4 469.6,54.5 470.5,53.1 467.0,51.8 466.5,49.9 470.5,45.7 476.6,46.5 476.6,53.1 478.3,56.6 480.1,53.9 479.2,49.5 481.0,46.9 486.2,47.8 490.6,46.9 490.6,45.0 500.2,44.6 501.9,42.5 510.6,41.1 521.1,40.2 531.6,37.7 536.8,39.5 545.6,40.0 548.2,41.1 542.1,44.3 547.3,44.8 557.8,46.0 566.5,44.8 571.7,45.3 576.1,49.5 582.2,48.7 589.2,48.8 594.4,46.9 604.9,47.3 611.9,48.7 617.1,49.7 627.6,50.4 629.4,51.8 638.1,52.2 646.8,51.5 648.6,53.1 657.3,51.7 664.3,53.1 664.3,60.1 661.7,61.0 659.9,64.5 653.8,65.7 647.7,68.9 639.8,69.3 635.5,72.4 633.7,72.8 634.6,75.9 632.9,78.1 629.4,81.2 626.7,83.0 623.6,84.7 622.4,81.2 621.5,76.8 622.4,74.2 627.6,71.5 632.0,68.0 636.3,64.5 629.4,65.7 624.1,66.1 620.6,69.8 615.4,70.7 610.2,69.6 599.7,70.1 595.3,72.8 590.1,76.8 586.1,78.2 590.1,79.5 595.3,80.9 596.7,82.6 595.3,85.6 595.0,89.1 591.8,92.1 587.5,96.2 582.2,99.2 578.7,99.7 578.2,100.1 578.7,98.8 579.2,95.7 582.2,95.1 585.7,89.3 581.3,90.5 578.4,90.0 577.0,88.3 572.6,86.9 570.0,82.1 565.6,80.3 560.4,80.9 559.5,82.1 557.8,86.5 555.7,87.4 553.8,86.9 549.9,86.1 543.8,87.7 536.8,86.5 529.0,86.0 528.1,84.0 522.0,83.0 520.2,86.5 510.6,85.1 503.6,87.9 502.4,88.1 498.4,86.5 494.9,84.7 489.7,85.1 484.4,80.3 478.3,79.5 474.0,77.3 470.5,77.2 463.5,78.6 457.4,79.8 456.5,84.7 452.1,84.7 446.0,85.4 439.0,83.7 434.7,86.5 432.1,89.1 431.7,89.5 433.8,90.5 435.6,92.8 432.9,94.4 432.1,96.2 432.9,98.8 434.7,100.9 431.2,100.9 428.6,99.3 426.0,99.2 419.8,98.1 417.2,96.5 414.6,95.3 415.5,94.2 416.3,92.1 418.6,91.6 416.7,91.6 419.3,90.4 420.0,87.2 416.3,86.7 412.0,85.8 409.4,82.5 405.5,82.8 404.6,81.0 407.1,80.5 403.8,78.1 404.0,76.6 399.2,75.6 397.8,73.3 398.9,70.0 398.9,69.4 402.4,69.1 399.8,68.0 398.5,68.0 402.4,65.7 405.0,63.8 403.3,61.9 401.9,60.5 402.4,58.9 400.6,56.8 402.4,55.3 399.8,53.9 400.6,52.7ZM439.9,48.7 442.5,45.1 447.8,42.1 456.5,40.2 469.6,39.2 465.2,41.1 454.8,42.9 449.5,45.5 450.4,50.1 444.3,49.9ZM597.9,78.9 599.7,81.2 600.2,84.7 602.3,88.3 599.7,91.8 597.9,93.5 597.9,90.0 597.9,86.5 597.6,83.0ZM515.9,36.5 521.1,34.9 526.3,35.1 533.3,36.5 524.6,37.4ZM590.1,42.0 596.2,41.1 604.9,42.1 599.7,42.9 590.9,43.0ZM660.8,49.2 664.3,48.7 664.3,49.9 661.7,49.9ZM35.7,53.1 42.7,55.2 49.7,56.6 53.5,58.3 48.8,61.2 44.4,60.5 39.2,59.2 35.7,60.1ZM384.2,78.8 389.8,78.8 389.6,77.7 387.0,77.2 384.7,77.9ZM621.5,85.8 622.7,85.1 622.0,86.1ZM358.7,71.5 362.2,72.4 364.8,71.9 368.3,70.3 370.1,70.7 371.8,68.0 371.3,66.3 371.3,63.6 374.4,61.0 375.3,58.3 378.8,54.8 381.4,53.9 384.9,53.1 385.8,53.0 391.0,53.4 393.6,53.1 395.4,51.7 398.9,51.3 400.6,52.7 403.8,52.0 404.1,50.8 399.8,49.5 394.5,49.4 388.4,50.8 383.2,51.7 377.9,53.4 375.3,55.7 372.7,58.0 370.1,60.5 366.6,62.7 362.2,64.0 358.7,65.4 358.7,68.0ZM369.7,70.8 370.1,70.7 371.8,68.0 371.3,66.3 371.3,63.6 374.4,61.0 375.3,58.3 378.8,54.8 381.4,53.9 384.9,53.1 385.8,53.0 391.0,55.0 391.4,57.5 392.3,58.7 388.4,59.2 387.5,61.0 384.0,63.1 380.6,65.4 380.0,67.7 382.8,68.9 382.3,70.3 379.7,71.4 378.8,73.7 377.9,75.6 375.3,75.9 374.8,77.0 372.7,77.0 372.2,75.6 371.0,73.5ZM381.8,74.2 383.2,72.6 382.8,73.8ZM385.8,53.0 391.0,53.4 393.6,53.1 395.4,51.7 398.9,51.3 400.6,52.7 399.8,53.9 402.4,55.3 400.6,56.8 402.4,58.9 401.9,60.5 403.3,61.9 405.0,63.8 402.4,65.7 398.5,68.0 395.4,68.2 390.2,69.1 387.5,67.8 387.2,65.6 387.0,64.0 389.3,62.4 392.8,60.5 394.2,59.6 392.3,58.7 391.4,57.5 391.0,55.0ZM364.1,76.6 364.3,74.2 366.6,73.8 368.5,72.9 368.3,75.1 368.9,75.9 367.1,77.2 366.6,78.0 365.0,77.9ZM369.2,76.5 371.8,75.9 371.8,77.2 370.6,78.1 369.2,77.3ZM340.0,86.3 343.9,86.0 348.3,85.3 352.3,84.6 352.4,84.0 350.9,83.9 353.0,81.9 350.3,81.2 349.8,80.0 347.7,78.1 347.2,76.8 344.8,75.9 346.5,74.4 346.9,73.1 343.0,72.9 344.6,71.4 341.3,71.4 339.9,73.3 340.4,75.1 339.5,75.9 341.3,77.2 341.3,78.1 343.9,77.9 344.8,79.5 344.8,80.5 342.1,80.7 342.7,82.1 340.9,83.3 344.4,84.0 342.5,84.6ZM339.2,79.4 340.4,78.6 339.2,77.3 336.9,77.5 336.0,78.6 337.3,79.3ZM337.3,73.3 339.2,71.7 339.0,72.9ZM347.4,68.0 348.4,68.4 347.7,69.1ZM344.4,70.5 345.5,70.7 344.8,71.0ZM332.5,83.5 335.2,83.9 339.0,82.6 339.5,80.7 339.2,79.4 337.3,79.3 336.0,78.6 336.9,77.5 336.9,77.2 335.2,78.4 332.5,79.1 333.4,80.7 332.9,82.5ZM346.9,98.1 347.9,96.0 347.9,93.5 346.2,91.8 342.1,90.4 341.8,89.1 344.8,88.6 347.4,89.0 346.9,87.0 347.9,87.6 350.3,87.4 352.6,86.3 352.8,84.9 354.4,84.6 355.6,85.3 357.3,86.5 358.4,86.3 360.1,87.4 361.2,87.4 364.3,88.3 363.3,90.7 362.0,91.3 360.7,93.0 362.2,93.7 361.5,95.1 363.3,96.9 363.1,97.4 361.3,98.6 358.7,98.1 357.0,97.9 355.2,98.6 355.6,99.9 353.0,99.7 350.0,99.3ZM365.0,99.9 366.4,98.8 366.6,100.6 366.1,101.6 365.2,101.1ZM333.9,98.6 336.0,97.6 340.4,97.8 343.9,97.9 346.9,98.1 350.0,99.3 353.0,99.7 355.6,99.9 355.6,100.8 353.8,101.8 351.2,102.7 349.7,104.8 350.3,106.2 349.0,107.6 348.6,108.3 346.5,109.7 342.3,109.9 340.2,111.1 339.0,109.9 337.1,109.0 337.3,106.9 337.8,105.3 337.8,103.7 338.1,102.3 339.2,101.3 338.5,100.7 335.7,100.8 334.5,100.8ZM354.2,104.8 355.9,104.5 355.6,105.3ZM320.5,124.7 321.7,124.3 321.2,125.2ZM322.4,125.0 323.1,125.0 322.8,125.6ZM325.0,124.2 325.9,124.0 325.6,124.9ZM334.5,100.8 335.7,100.8 338.5,100.7 339.2,101.3 338.1,102.3 337.8,103.7 337.8,105.3 337.3,106.9 337.1,109.0 334.5,109.4 334.6,106.9 333.4,106.2 334.5,103.7ZM362.2,80.2 364.8,80.2 365.0,77.9 366.6,78.0 367.5,78.8 369.2,78.8 371.8,78.8 374.8,79.6 375.1,80.9 375.7,83.0 376.2,84.7 375.0,84.7 371.5,86.0 371.8,87.0 374.1,88.6 372.7,90.9 368.3,91.1 366.8,90.9 363.3,90.7 364.3,88.3 361.2,87.4 360.7,86.3 360.5,85.1 360.5,83.3 361.9,83.0 362.6,80.9ZM355.9,84.0 357.9,82.6 358.4,81.2 360.5,80.5 362.2,80.2 362.6,80.9 361.9,83.0 360.5,83.3 360.5,85.1 360.0,85.1 358.7,84.0 357.5,84.0ZM354.4,84.6 355.9,84.0 357.5,84.0 358.7,84.0 360.0,85.1 360.5,85.1 360.7,86.3 360.1,87.4 358.4,86.3 357.3,86.5 355.6,85.3ZM360.7,93.0 362.2,93.7 364.8,93.5 365.7,93.9 368.3,92.7 368.3,92.0 366.8,90.9 363.3,90.7 362.0,91.3ZM366.8,90.9 368.3,91.1 372.7,90.9 374.1,88.6 376.2,88.3 379.7,89.0 379.9,90.0 378.3,92.0 375.3,92.8 373.9,92.7 371.7,92.3 368.3,92.0ZM363.1,97.4 363.3,96.9 361.5,95.1 362.2,93.7 364.8,93.5 365.7,93.9 368.3,92.7 368.3,92.0 371.7,92.3 373.9,92.7 373.9,94.2 371.5,94.8 371.7,96.5 373.7,97.9 374.8,99.9 377.9,100.8 377.9,101.5 382.3,103.9 382.1,104.5 379.7,103.2 379.0,104.6 379.9,105.9 378.8,106.9 377.9,107.8 377.2,107.3 377.9,105.9 377.2,104.1 375.3,103.0 374.1,102.0 371.5,101.1 369.2,99.9 368.3,98.8 367.8,97.2 365.4,96.4 364.0,97.2ZM371.7,107.6 377.2,107.1 376.4,109.9 371.7,108.3ZM364.3,102.3 366.8,102.2 366.8,105.5 364.7,105.9ZM374.8,79.6 378.8,78.6 382.3,78.2 384.2,78.8 389.8,78.8 391.0,79.6 391.7,81.7 391.2,83.9 391.9,85.1 389.6,87.9 384.9,87.9 382.8,87.4 379.7,85.8 376.2,84.7 375.7,83.0 375.1,80.9ZM371.5,86.0 375.0,84.7 376.2,84.7 379.7,85.8 382.8,87.4 379.7,89.0 376.2,88.3 374.1,88.6 371.8,87.0ZM379.7,89.0 382.8,87.4 384.9,87.9 389.3,88.1 388.8,89.3 385.8,89.1 382.8,90.4 379.9,90.0ZM378.3,92.0 379.9,90.0 382.8,90.4 385.8,89.1 388.8,89.3 390.0,90.0 387.0,93.0 385.3,93.4 382.8,93.7 380.6,93.7 378.5,92.7ZM385.3,93.4 387.0,93.0 390.0,90.0 393.5,90.5 396.4,89.7 399.1,92.0 399.2,94.4 401.9,94.9 399.9,97.6 397.1,96.9 394.3,97.8 389.6,96.7 389.1,95.8 387.4,95.7ZM389.1,96.7 389.6,96.7 394.3,97.8 397.1,96.9 399.9,97.6 398.9,100.6 395.9,101.1 394.2,102.0 390.2,101.8 389.1,100.1ZM384.9,104.6 386.3,102.5 390.2,101.8 394.2,102.0 395.9,101.1 395.4,102.5 391.9,102.9 391.6,104.1 389.5,103.2 390.2,105.9 391.9,107.3 390.5,107.8 390.5,110.3 389.1,110.3 387.9,109.7 387.0,108.0 386.1,106.2ZM391.0,112.0 395.9,112.5 393.3,113.1 391.0,112.5ZM398.5,110.4 399.2,111.0 398.5,111.3ZM373.9,94.2 373.9,92.7 375.3,92.8 378.3,92.0 378.5,92.7 376.7,94.4ZM373.9,94.2 376.7,94.4 378.5,92.7 380.6,93.7 382.8,93.7 383.2,95.3 378.8,94.9 377.9,96.7 380.6,98.8 382.3,99.7 379.7,98.8 376.5,96.7 375.0,94.9ZM377.9,96.7 378.8,94.9 383.2,95.3 384.0,97.1 383.5,97.9 382.3,99.3 380.6,98.8ZM383.2,95.3 382.8,93.7 385.3,93.4 387.4,95.7 389.1,95.8 389.1,96.7 389.1,100.1 387.5,100.2 385.8,100.6 385.1,99.3 383.5,97.9 384.0,97.1ZM382.3,99.7 382.3,99.3 383.5,97.9 385.1,99.3 383.9,100.8ZM383.9,100.8 385.1,99.3 385.8,100.6 386.3,102.5 384.9,104.6 383.9,103.6ZM385.8,100.6 387.5,100.2 389.1,100.1 390.2,101.8 386.3,102.5ZM390.9,71.5 391.0,70.3 395.4,69.6 398.9,70.0 397.8,73.3 394.5,72.4 392.4,72.6ZM388.4,71.4 390.2,71.5 388.9,72.4ZM386.7,74.5 387.5,73.3 389.5,72.9 390.5,74.2 392.4,72.6 394.5,72.4 397.8,73.3 399.2,75.6 396.4,76.5 393.6,75.4 386.7,75.8ZM386.7,75.8 393.6,75.4 396.4,76.5 394.9,78.9 391.0,79.6 389.8,78.8 389.6,77.7 387.0,77.2ZM391.0,79.6 394.9,78.9 396.4,76.5 399.2,75.6 404.0,76.6 403.8,78.1 407.1,80.5 404.6,81.0 405.5,82.8 403.3,84.2 397.1,83.7 391.2,83.9 391.7,81.7ZM388.8,89.3 389.3,88.1 389.6,87.9 391.9,85.1 391.2,83.9 397.1,83.7 403.3,84.2 405.5,82.8 409.4,82.5 412.0,85.8 416.3,86.7 420.0,87.2 419.3,90.4 416.7,91.6 411.1,93.2 413.7,94.6 412.0,95.3 408.5,96.4 406.7,94.6 408.5,93.4 404.1,92.5 401.9,94.9 399.2,94.4 402.4,92.8 398.9,89.3 396.4,89.7 393.5,90.5 390.0,90.0ZM396.4,89.7 398.9,89.3 402.4,92.8 399.2,94.4 399.1,92.0ZM308.1,59.2 311.6,57.6 318.6,58.0 323.8,58.0 326.4,60.1 323.8,61.3 317.7,62.9 311.6,62.2 311.6,60.5ZM395.7,104.1 395.9,101.1 398.9,100.6 400.8,102.0 405.0,101.8 408.5,100.6 411.1,100.6 413.7,101.8 417.2,102.5 422.5,101.5 426.0,102.2 426.3,103.9 428.2,104.6 427.3,106.9 428.2,109.0 424.0,109.2 419.8,109.7 416.3,109.7 414.1,109.7 413.2,111.3 412.9,110.1 409.4,110.8 406.7,111.0 403.4,109.7 401.5,110.8 398.0,109.4 396.1,106.7ZM406.4,112.9 410.2,111.8 409.4,113.1 406.7,113.6ZM419.8,98.1 426.0,99.2 428.6,99.3 431.2,100.9 431.0,102.2 428.6,101.8 426.0,102.2 422.5,101.5 422.5,99.7ZM426.0,102.2 428.6,101.8 431.2,105.0 430.7,106.0 428.2,104.6 426.3,103.9ZM428.6,101.8 431.0,102.2 431.2,100.9 434.7,100.9 437.8,103.6 436.1,105.3 435.4,106.9 433.8,106.2 433.8,104.8 430.7,106.0 431.2,105.0ZM132.3,89.3 135.2,89.7 135.6,88.3 183.8,88.3 184.8,88.8 189.4,89.5 193.7,90.0 195.7,89.5 201.9,92.1 204.2,93.5 206.0,94.8 206.1,98.8 204.9,100.4 206.0,101.1 212.1,99.2 211.9,98.1 215.9,97.8 216.8,96.7 219.2,95.3 225.2,95.3 226.4,94.6 227.4,93.0 229.2,91.1 230.7,91.3 231.6,91.8 231.6,94.1 232.3,94.9 233.0,95.7 230.4,96.5 227.8,97.4 226.6,98.8 226.4,99.7 227.8,100.9 225.7,101.5 221.7,102.5 220.8,103.2 220.4,105.0 219.1,106.0 218.2,107.6 217.3,109.4 217.8,111.1 218.2,112.5 216.4,113.4 214.2,114.7 212.1,115.9 209.4,117.8 208.1,119.9 207.9,121.7 209.3,124.3 210.1,127.3 209.8,130.0 208.6,130.3 207.2,128.7 205.6,125.7 205.4,123.5 203.3,121.7 201.1,122.2 199.0,121.0 196.4,121.2 193.7,121.3 194.3,123.3 192.0,123.1 189.4,122.4 186.2,122.2 184.1,123.1 181.5,124.7 180.1,126.5 180.3,128.9 177.0,128.0 176.3,126.1 174.2,123.3 173.0,122.1 171.0,122.2 169.8,123.5 167.5,122.4 164.2,118.6 161.1,118.6 161.1,119.4 156.2,119.4 149.6,117.3 145.5,117.3 145.2,116.1 143.3,114.7 139.6,113.8 139.3,112.5 137.2,110.1 136.1,108.5 135.2,107.1 133.8,105.0 132.8,103.4 133.3,100.9 132.6,99.2 133.5,96.2 133.5,93.2ZM103.8,52.0 103.8,68.4 107.0,68.7 109.9,70.8 113.4,69.3 117.1,71.7 119.9,74.9 123.0,75.9 123.0,77.7 120.4,77.3 117.8,75.9 115.2,74.2 112.5,72.4 109.9,71.4 106.4,69.4 102.9,68.9 98.6,68.9 95.1,67.5 91.6,68.0 89.0,69.3 85.5,70.3 85.5,68.0 88.1,66.8 84.6,67.5 82.0,69.8 80.8,71.9 76.8,74.2 73.3,75.9 68.9,77.3 65.4,78.2 62.3,78.6 66.3,76.6 69.8,75.9 73.3,74.2 75.0,71.5 72.4,71.2 69.8,71.0 67.1,70.7 67.1,68.9 63.7,68.9 61.4,67.1 60.2,65.4 62.3,63.6 66.3,62.7 68.9,61.9 68.0,61.0 64.5,61.0 59.6,60.8 56.7,59.0 60.2,58.0 64.0,57.3 67.1,57.5 64.5,56.2 61.9,54.3 60.2,53.4 64.5,52.5 68.0,50.8 73.3,49.9 76.8,49.0 81.1,49.7 85.5,50.4 91.6,50.8 96.8,51.3ZM77.8,138.9 79.4,139.8 78.3,141.1 77.6,140.0ZM73.8,136.5 74.7,137.0 74.1,137.2ZM71.2,135.6 71.7,135.6 71.5,136.0ZM76.6,137.5 77.4,137.9 76.9,138.2ZM80.2,73.1 84.1,72.6 82.0,74.2ZM51.4,62.6 54.9,63.3 52.3,63.4ZM103.8,52.0 107.3,52.2 111.7,53.2 116.0,52.2 121.3,51.3 125.6,50.4 128.3,51.3 131.8,52.2 135.2,51.7 138.7,51.8 145.7,53.2 150.1,54.5 152.7,55.2 157.9,55.0 161.4,55.7 161.4,53.9 166.7,53.9 171.9,55.2 178.0,55.2 179.8,53.9 182.4,54.5 183.3,52.2 181.9,50.4 182.4,48.7 185.0,47.8 187.6,49.5 189.4,51.3 190.2,52.2 192.0,53.9 195.5,54.8 196.4,53.1 200.7,51.8 206.0,51.8 207.7,53.4 206.8,55.2 207.7,56.6 204.2,58.0 200.7,57.5 198.6,58.3 198.1,60.1 195.5,61.5 192.0,62.4 188.5,64.5 185.9,66.3 184.5,68.9 185.0,71.0 187.6,71.5 188.5,73.8 192.0,73.8 196.4,75.1 201.6,76.8 206.0,77.3 206.5,81.2 207.7,82.6 209.4,84.2 211.2,84.2 212.4,82.1 212.1,79.5 210.8,78.1 214.7,76.8 216.1,74.2 213.8,71.2 214.7,68.9 213.8,65.0 218.2,64.9 221.7,65.4 225.2,66.8 228.1,67.1 228.7,69.8 227.8,71.0 231.3,71.5 234.8,71.0 236.9,68.4 238.3,69.8 240.9,72.4 242.6,75.1 245.2,77.2 249.6,78.6 252.2,81.2 252.6,83.0 250.5,83.9 247.0,85.6 242.6,86.1 237.4,86.0 233.9,86.1 230.4,88.3 226.9,91.3 225.7,92.1 228.7,90.4 233.0,88.3 237.4,87.9 237.7,89.0 235.6,90.0 236.9,91.4 237.4,93.0 240.0,93.5 242.6,94.1 245.2,93.0 245.4,93.9 243.5,94.9 239.1,96.0 235.6,97.8 234.4,97.1 236.5,94.9 233.9,94.9 232.3,94.9 231.6,94.1 231.6,91.8 230.7,91.3 229.2,91.1 227.4,93.0 226.4,94.6 225.2,95.3 219.2,95.3 216.8,96.7 215.9,97.8 211.9,98.1 212.1,99.2 206.0,101.1 204.9,100.4 206.1,98.8 206.0,94.8 204.2,93.5 201.9,92.1 195.7,89.5 193.7,90.0 189.4,89.5 184.8,88.8 183.8,88.3 135.6,88.3 134.9,87.7 132.1,86.0 128.3,84.7 126.9,82.6 124.8,80.3 122.5,78.6 123.0,77.7 123.0,75.9 119.9,74.9 117.1,71.7 113.4,69.3 109.9,70.8 107.0,68.7 103.8,68.4ZM134.4,89.3 130.9,88.4 126.2,85.4 128.3,85.1 131.8,86.5 134.4,88.3ZM119.9,80.9 117.8,79.3 119.9,79.5 120.9,82.5ZM246.5,90.7 247.9,89.1 249.6,85.6 251.4,83.9 253.1,83.9 252.2,86.5 254.8,87.4 257.5,89.1 258.0,90.9 256.6,92.3 253.1,92.0 252.2,90.9ZM238.3,86.7 241.7,87.4 242.1,88.1 238.3,87.6ZM237.9,92.1 241.7,92.8 240.9,93.5 238.3,92.8ZM236.5,65.6 231.3,64.9 225.2,63.3 219.9,61.3 213.8,61.2 214.7,59.6 220.8,60.5 222.0,58.3 221.7,55.7 219.1,53.9 213.8,52.2 212.1,50.8 203.3,51.3 196.4,50.4 193.7,49.2 193.7,45.1 199.8,44.6 201.6,46.4 206.8,44.8 213.8,45.5 217.3,46.4 224.3,48.5 231.3,50.9 233.0,53.1 238.3,55.7 241.7,56.6 242.6,57.5 239.1,59.2 239.1,60.5 235.6,61.0 237.0,63.6ZM145.7,51.5 142.2,49.0 144.8,46.2 151.0,45.7 161.4,45.7 166.7,46.4 167.5,49.5 172.8,51.7 171.9,53.2 164.9,53.8 159.7,53.4 151.8,53.8 146.6,52.7ZM131.8,48.0 134.4,44.6 139.6,43.4 147.5,45.1 142.2,47.8 138.7,49.0 134.4,49.2ZM198.1,61.9 200.7,58.7 203.3,59.2 208.6,61.9 207.7,62.7 201.6,63.3ZM210.3,64.3 211.2,65.7 209.8,65.9ZM205.1,64.0 207.2,63.8 206.8,64.9ZM210.3,74.2 212.4,75.4 210.7,75.9ZM207.7,80.9 210.3,81.6 208.6,81.9ZM192.9,39.9 196.4,36.3 189.4,31.9 201.6,29.7 219.1,28.2 241.7,29.3 238.3,31.4 231.3,33.2 224.3,35.5 217.3,36.3 213.8,39.3 206.8,40.0ZM182.4,39.9 189.4,42.5 196.4,43.2 210.3,43.2 210.3,41.3 199.8,40.7 192.9,40.4ZM181.5,34.1 187.6,31.6 196.4,33.2 198.1,35.5 191.1,36.9 184.1,36.3ZM171.9,46.4 177.1,44.6 179.8,46.0 180.6,48.1 176.3,49.0 171.9,48.1ZM183.3,44.6 187.6,44.1 192.0,45.0 189.4,47.4 184.1,47.4ZM145.7,42.0 151.0,39.9 159.7,39.9 165.8,41.1 164.1,42.9 154.4,43.4 147.5,42.9ZM168.4,39.9 177.1,39.7 179.8,42.1 173.7,42.5 168.4,41.6ZM135.2,40.4 140.5,38.6 147.5,38.3 146.6,40.4 140.5,41.1ZM166.7,35.6 177.1,34.1 178.9,36.3 170.2,37.2ZM174.5,50.9 179.8,51.7 182.4,53.1 178.9,53.9 174.5,52.5ZM222.5,36.9 231.3,33.7 245.2,30.2 271.4,29.3 292.4,27.4 311.6,29.3 320.3,31.1 329.0,31.1 320.3,33.7 316.8,37.2 317.7,40.7 315.1,43.4 311.6,46.9 311.6,50.4 304.6,53.1 294.1,54.8 287.1,58.7 281.0,59.2 278.4,62.7 274.9,68.0 273.2,69.1 266.2,67.5 262.7,64.5 259.2,61.0 256.6,57.5 257.5,53.9 261.0,52.2 254.8,50.4 254.8,46.9 250.5,43.4 243.5,40.7 233.0,40.7 226.0,38.6ZM145.5,117.3 149.6,117.3 156.2,119.4 161.1,119.4 161.1,118.6 164.2,118.6 167.5,122.4 169.8,123.5 171.0,122.2 173.0,122.1 174.2,123.3 176.3,126.1 177.0,128.0 180.3,128.9 179.4,132.3 179.2,135.3 180.3,138.1 182.4,141.1 184.5,142.3 187.6,142.1 190.2,141.8 192.0,139.3 192.3,137.5 196.4,136.5 198.4,137.0 197.2,140.2 196.7,142.5 195.8,141.9 194.4,143.2 191.1,143.2 192.0,146.2 190.2,146.3 189.0,148.8 185.9,146.2 182.4,146.9 178.9,146.0 175.4,144.6 171.9,142.8 168.4,141.1 165.8,138.8 166.1,136.7 164.1,133.5 161.4,130.5 159.0,129.3 158.8,127.0 156.2,125.2 154.1,123.5 152.7,119.9 149.7,118.7 149.7,120.8 151.8,123.5 153.6,126.1 156.2,129.6 157.9,132.3 158.8,134.0 157.6,134.0 154.4,130.9 153.9,128.4 151.0,126.6 150.1,124.3 147.8,121.7 146.1,118.5ZM189.0,148.8 190.2,146.3 192.0,146.2 191.1,143.2 194.4,143.2 194.3,146.5 195.8,146.9 194.3,149.2 192.7,150.2ZM194.4,143.2 195.8,141.9 196.2,143.7 194.8,146.5 194.3,146.5ZM195.8,146.9 199.8,146.5 203.3,146.7 204.7,148.1 201.9,148.5 198.6,150.2 197.6,151.6 196.7,150.9 194.3,149.2ZM192.7,150.2 194.3,149.2 196.7,150.9 196.7,151.3ZM197.6,151.6 198.6,150.2 201.9,148.5 204.7,148.1 204.2,152.5 203.9,155.1 200.4,155.0ZM200.4,155.0 203.9,155.1 205.8,157.6 205.3,160.2 203.9,159.4 201.6,156.9ZM205.3,160.2 205.8,157.6 208.6,159.0 211.2,157.6 215.0,159.2 214.0,161.8 212.9,160.1 210.3,159.9 209.4,161.7 207.4,161.1ZM201.6,136.1 205.1,134.0 209.4,133.8 215.6,136.5 219.1,138.1 220.4,138.9 214.7,139.5 214.2,138.2 212.1,136.7 206.8,135.1 203.3,135.8ZM220.1,142.1 222.5,139.5 224.8,139.8 224.8,143.2 223.4,142.5ZM224.8,139.8 227.8,139.7 230.6,141.8 227.8,142.3 224.8,143.2ZM213.3,142.1 216.8,142.5 215.2,143.2ZM232.7,141.9 235.5,142.1 234.8,142.9 232.7,142.8ZM213.8,127.5 215.6,127.9 214.7,128.4ZM213.3,130.5 214.3,131.9 213.5,131.7ZM217.3,131.4 218.5,132.4 217.8,132.6ZM242.1,155.5 243.7,155.7 243.1,156.7ZM548.2,213.2 549.4,212.9 553.9,210.6 557.8,209.7 562.1,207.9 563.5,205.3 565.6,204.9 567.4,203.2 570.0,199.5 573.5,200.5 576.1,200.5 577.0,197.4 578.4,196.3 581.3,194.6 585.7,196.0 588.9,195.6 587.5,198.3 586.6,200.9 590.1,202.7 593.6,205.3 595.8,205.3 597.2,200.9 597.2,197.0 598.8,193.5 600.6,197.0 601.1,199.8 603.7,200.9 604.9,204.4 605.3,207.8 609.3,210.1 611.4,213.7 613.3,215.9 616.8,219.0 617.5,222.0 618.2,225.2 617.1,229.1 615.7,232.1 614.0,234.3 612.2,237.9 611.9,240.5 608.4,241.2 605.6,243.3 602.8,241.7 600.6,242.8 596.2,241.6 594.1,239.6 593.6,237.5 591.3,237.2 590.9,232.6 589.2,234.3 587.1,235.7 585.7,233.5 584.0,232.1 579.1,229.9 575.2,230.3 570.0,231.3 566.5,232.6 565.6,234.2 561.3,234.0 558.6,234.9 556.0,236.1 552.5,235.9 550.8,234.9 552.0,230.8 550.8,227.3 549.4,222.9 547.8,220.3 548.5,216.7ZM602.6,246.1 605.8,246.8 608.9,246.5 608.8,248.4 607.5,250.5 605.8,251.2 603.7,249.3ZM588.7,237.3 590.6,237.3 589.7,237.9ZM577.5,194.7 579.2,194.4 578.4,195.3ZM651.5,235.0 654.7,237.9 656.4,239.1 657.3,240.7 661.5,240.9 660.4,243.5 659.0,244.0 657.6,246.7 655.9,247.7 655.0,247.2 655.7,244.9 653.5,243.8 655.0,241.4 654.7,239.6 652.1,236.1ZM651.5,245.8 654.3,247.9 652.1,250.2 651.2,251.6 648.9,252.8 648.0,255.3 645.1,256.5 642.5,255.8 640.7,255.1 643.3,252.3 647.7,250.0 649.4,247.9ZM623.2,186.3 625.0,187.3 624.1,187.5ZM627.6,188.6 630.2,190.0 629.0,189.6ZM629.4,191.0 630.8,191.7 629.7,191.7ZM631.6,192.6 633.2,193.3 632.2,193.2ZM640.9,200.9 641.9,202.0 641.2,202.0ZM643.5,203.0 644.2,204.4 643.7,204.1ZM636.3,209.9 639.0,211.5 641.6,213.7 639.8,213.2 637.2,211.1ZM659.6,205.3 661.8,205.5 660.8,206.5ZM662.2,203.5 664.1,203.0 663.4,204.1ZM49.2,198.4 50.4,198.4 49.9,199.1ZM88.4,205.3 89.5,205.5 89.0,206.0ZM74.8,200.2 75.7,200.4 75.4,200.9ZM651.9,171.9 652.6,172.2 652.1,172.6ZM236.7,117.5 237.2,117.7 236.9,117.8ZM259.8,167.1 262.7,171.3 262.7,174.5 266.2,175.7 271.4,177.1 272.7,179.3 276.7,179.4 280.2,179.4 283.7,181.5 285.4,183.1 288.4,183.7 289.2,187.2 288.5,190.3 285.4,193.9 282.8,197.4 281.9,200.9 281.6,205.8 280.5,208.8 278.4,212.9 276.7,215.0 272.3,215.3 269.2,216.7 265.3,219.9 265.1,223.8 262.7,227.3 260.1,229.9 258.3,232.6 256.8,233.8 257.1,232.1 253.1,228.7 249.4,227.7 252.2,224.7 255.7,222.5 256.1,221.1 254.7,219.6 255.2,216.7 253.1,216.6 252.6,213.7 248.7,213.4 248.7,209.7 248.4,209.3 249.6,206.2 248.0,203.2 244.9,203.2 244.4,198.8 241.7,197.4 238.3,196.5 236.0,193.9 236.0,191.7 233.9,191.9 230.4,193.9 228.5,193.9 226.7,193.9 226.7,191.2 223.4,191.2 222.2,191.0 221.0,187.5 222.7,183.7 228.0,181.9 228.8,176.6 227.8,173.6 229.4,173.4 228.1,171.5 233.0,172.4 234.2,173.3 235.6,173.1 238.3,171.9 239.3,170.6 237.9,170.1 238.3,167.5 240.4,168.0 243.5,166.6 244.0,165.3 245.2,165.7 245.4,166.6 245.9,168.3 245.2,169.7 245.8,171.3 247.3,172.4 251.4,171.2 252.4,171.0 254.8,170.5 257.6,170.6ZM261.8,174.7 264.4,174.9 265.3,176.3 262.7,177.3 261.3,176.3ZM215.0,159.2 218.2,155.8 219.4,155.1 222.5,154.3 224.8,152.7 225.5,153.7 223.4,155.1 222.5,158.3 223.6,159.9 223.6,161.5 227.6,162.2 228.8,163.8 232.1,163.6 231.6,166.6 232.5,168.5 231.6,169.6 233.0,172.4 228.1,171.5 229.4,173.4 227.8,173.6 228.8,176.6 228.0,181.9 226.6,181.2 227.6,179.3 222.7,178.7 220.1,175.6 218.5,174.7 214.7,173.8 212.4,172.0 214.7,167.5 214.9,163.1 214.0,161.8ZM225.5,153.7 227.8,153.0 230.7,155.8 234.8,155.8 237.4,156.5 241.7,155.7 243.5,157.4 245.2,159.5 243.5,162.2 243.0,163.9 244.0,165.3 243.5,166.6 240.4,168.0 238.3,167.5 237.9,170.1 239.3,170.6 238.3,171.9 235.6,173.1 234.2,173.3 233.0,172.4 231.6,169.6 232.5,168.5 231.6,166.6 232.1,163.6 228.8,163.8 227.6,162.2 223.6,161.5 223.6,159.9 222.5,158.3 223.4,155.1ZM245.2,159.5 247.9,162.2 250.1,163.9 250.0,165.3 248.7,167.5 249.6,168.7 251.4,171.2 247.3,172.4 245.8,171.3 245.2,169.7 245.9,168.3 245.4,166.6 245.2,165.7 244.0,165.3 243.0,163.9 243.5,162.2ZM250.1,163.9 255.7,164.3 254.8,165.9 255.4,168.3 254.8,170.5 252.4,171.0 251.4,171.2 249.6,168.7 248.7,167.5 250.0,165.3ZM255.7,164.3 258.7,165.9 259.8,167.1 257.6,170.6 254.8,170.5 255.4,168.3 254.8,165.9ZM212.4,172.0 214.7,173.8 218.5,174.7 218.0,177.1 213.3,180.5 212.1,183.3 209.6,182.2 209.8,180.5 210.3,178.9 208.6,178.4 208.9,176.3 210.1,173.1ZM209.8,180.5 209.6,182.2 212.1,183.3 213.3,180.5 218.0,177.1 218.5,174.7 220.1,175.6 222.7,178.7 227.6,179.3 226.6,181.2 228.0,181.9 222.7,183.7 221.0,187.5 222.2,191.0 223.4,191.2 226.7,191.2 226.7,193.9 228.5,193.9 230.0,196.5 229.5,200.0 228.7,201.8 229.5,203.5 228.5,205.3 227.1,206.7 225.2,204.9 219.1,201.8 216.8,199.0 215.2,195.6 213.5,192.1 211.2,187.7 208.2,185.1 208.1,182.8ZM228.5,193.9 230.4,193.9 233.9,191.9 236.0,191.7 236.0,193.9 238.3,196.5 241.7,197.4 244.4,198.8 244.9,203.2 248.0,203.2 249.6,206.2 248.4,209.3 246.8,208.5 242.3,209.0 240.7,213.6 237.7,214.6 236.2,213.4 233.0,214.6 231.4,214.6 230.9,212.3 230.0,208.8 228.7,205.3 228.5,205.3 229.5,203.5 228.7,201.8 229.5,200.0 230.0,196.5ZM240.7,213.6 242.3,209.0 246.8,208.5 248.4,209.3 248.7,209.7 248.7,213.4 252.6,213.7 253.1,216.6 255.2,216.7 254.7,219.6 254.3,221.5 252.6,222.7 247.7,222.5 249.4,219.4 246.1,217.3ZM249.4,227.7 253.1,228.7 257.1,232.1 256.8,233.8 254.1,235.9 250.5,235.2 248.0,234.2 248.6,230.8ZM233.0,214.6 236.2,213.4 237.7,214.6 240.7,213.6 246.1,217.3 249.4,219.4 247.7,222.5 252.6,222.7 254.3,221.5 254.7,219.6 256.1,221.1 255.7,222.5 252.2,224.7 249.4,227.7 248.6,230.8 248.0,234.2 250.1,237.0 250.5,238.4 249.4,241.4 245.2,243.0 241.4,243.0 241.2,246.3 236.5,246.7 238.8,249.3 236.0,253.0 232.1,255.5 235.1,257.6 231.8,261.6 229.5,264.3 230.6,266.5 227.8,266.0 224.3,266.0 223.4,263.4 222.0,261.6 224.3,257.2 224.8,253.7 224.6,249.3 226.0,243.1 226.9,238.7 227.8,233.5 228.1,228.2 230.4,222.4 230.7,218.1ZM230.2,267.3 236.2,270.8 233.0,271.7 230.2,271.1ZM227.1,206.7 228.7,205.3 230.0,208.8 230.9,212.3 231.4,214.6 233.0,214.6 230.7,218.1 230.4,222.4 228.1,228.2 227.8,233.5 226.9,238.7 226.0,243.1 224.6,249.3 224.8,253.7 224.3,257.2 222.0,261.6 223.4,263.4 224.3,266.0 227.8,266.0 230.6,266.5 228.7,267.1 226.0,269.2 222.5,268.7 219.1,264.3 218.2,259.0 219.9,253.7 221.1,248.4 221.7,244.0 222.5,240.0 224.8,232.6 225.2,227.3 226.9,218.5 227.6,211.5ZM230.2,267.3 230.2,271.1 233.0,271.7 229.5,271.8 225.2,270.4 226.9,268.8ZM220.3,248.4 221.7,248.4 221.3,250.9 220.1,250.5ZM190.2,175.0 191.5,175.2 190.8,176.3Z"/>
<g stroke="#e8a326" stroke-width="1.1" stroke-linejoin="round">
<path fill="#c3e0c8" d="M327.0,125.7 334.8,125.7 334.8,124.0 340.4,122.2 343.7,119.9 347.9,117.8 346.9,114.7 346.2,112.7 340.7,111.5 339.5,111.7 338.1,114.7 335.2,115.9 332.9,119.1 333.1,121.7 329.9,124.3Z"/>
<path fill="#f5f9f5" d="M320.1,137.7 327.3,137.0 327.3,134.0 329.0,133.1 329.0,128.7 334.8,128.7 334.8,125.7 327.0,125.7 324.2,129.6 322.1,132.8Z"/>
<path fill="#c3e0c8" d="M334.8,125.7 334.8,126.5 341.6,130.5 352.1,137.4 355.8,141.1 357.3,140.7 360.5,140.2 363.1,137.9 371.0,133.1 367.5,131.4 366.6,127.9 367.3,125.2 366.6,121.3 365.7,118.2 363.1,115.0 364.5,112.9 365.0,109.6 360.5,109.4 355.2,109.6 350.0,111.3 346.2,112.7 346.9,114.7 347.9,117.8 343.7,119.9 340.4,122.2 334.8,124.0Z"/>
<path fill="#c3e0c8" d="M365.0,109.6 364.5,112.9 363.1,115.0 365.7,118.2 366.6,121.3 367.8,120.8 370.1,117.3 370.3,116.1 367.8,114.7 368.9,112.0 369.2,109.4 367.1,108.9Z"/>
<path fill="#c3e0c8" d="M366.6,121.3 367.3,125.2 366.6,127.9 367.5,131.4 371.0,133.1 374.8,134.7 377.9,133.3 391.9,140.2 391.9,139.3 393.6,139.3 393.6,135.8 393.6,118.9 390.2,117.1 387.5,116.6 384.9,119.1 384.0,121.2 380.6,120.3 376.7,117.7 372.7,116.6 370.3,116.1 370.1,117.3 367.8,120.8Z"/>
<path fill="#9fd1a3" d="M393.6,118.9 393.6,135.8 405.0,135.8 414.4,135.8 412.3,132.4 409.7,127.0 406.9,121.9 409.7,125.7 410.9,122.6 409.9,119.4 406.4,119.6 404.1,118.9 400.6,120.1 397.1,119.2Z"/>
<path fill="#c3e0c8" d="M393.6,135.8 414.4,135.8 415.3,137.5 415.0,141.1 417.2,142.8 414.6,144.6 413.7,148.1 413.7,149.3 413.0,152.1 411.3,153.7 409.5,156.0 409.5,159.5 407.6,160.4 411.6,165.0 409.4,167.1 404.1,168.0 401.5,166.6 397.8,165.5 394.0,161.3 392.8,159.0 391.0,156.9 389.8,155.1 389.3,152.0 388.4,150.7 390.2,146.9 391.9,146.9 391.9,140.2 391.9,139.3 393.6,139.3Z"/>
<path fill="#f5f9f5" d="M413.7,148.1 414.6,144.6 417.2,142.8 419.8,147.0 425.3,152.1 424.0,152.7 419.8,149.2 416.2,148.5 413.7,149.3Z"/>
<path fill="#c3e0c8" d="M413.7,149.3 416.2,148.5 419.8,149.2 424.0,152.7 423.0,155.1 424.9,155.3 425.1,157.8 426.8,158.7 432.1,160.4 433.8,160.4 428.6,165.7 423.3,167.3 421.6,167.6 419.0,168.3 416.3,168.2 412.9,166.8 411.6,165.0 407.6,160.4 409.5,159.5 409.5,156.0 411.3,153.7 413.0,152.1Z"/>
<path fill="#f5f9f5" d="M423.0,155.1 424.0,152.7 425.3,152.1 425.6,154.3 424.9,155.3Z"/>
<path fill="#f5f9f5" d="M424.9,155.3 425.6,154.3 427.7,156.2 431.2,155.5 435.6,154.6 439.4,153.4 439.2,156.2 437.3,160.4 433.8,166.6 430.3,170.6 426.0,173.6 422.6,177.5 421.6,175.9 421.6,169.6 423.3,167.3 428.6,165.7 433.8,160.4 432.1,160.4 426.8,158.7 425.1,157.8Z"/>
<path fill="#c3e0c8" d="M409.4,167.1 411.6,165.0 412.9,166.8 416.3,168.2 419.0,168.3 421.6,167.6 421.6,169.6 421.6,175.9 422.6,177.5 420.2,179.4 418.4,182.8 415.8,180.7 409.4,176.3 409.4,174.1 411.1,171.5Z"/>
<path fill="#c3e0c8" d="M404.1,168.0 409.4,167.1 411.1,171.5 409.4,174.1 409.4,176.3 403.3,176.3 401.7,177.0 401.9,173.4 404.1,170.6Z"/>
<path fill="#c3e0c8" d="M403.3,176.3 409.4,176.3 415.8,180.7 418.4,182.8 417.7,185.9 419.0,188.6 420.5,193.0 415.5,195.1 410.6,194.7 410.1,191.6 407.3,190.9 404.1,189.6 401.5,185.9 401.3,182.2 403.3,180.7 403.8,178.7Z"/>
<path fill="#d9ebdc" d="M400.5,178.7 401.7,177.0 403.3,176.3 403.8,178.7 402.2,179.4Z"/>
<path fill="#f5f9f5" d="M400.6,179.4 402.2,179.4 403.8,178.7 403.3,180.7 401.3,182.2Z"/>
<path fill="#c3e0c8" d="M371.3,184.9 372.7,182.6 375.1,183.1 377.8,181.4 378.3,178.4 380.9,175.4 381.4,171.0 382.5,168.3 382.5,166.8 384.0,165.5 389.3,167.3 392.8,165.5 397.8,165.5 401.5,166.6 404.1,168.0 404.1,170.6 401.9,173.4 401.7,177.0 400.5,178.7 400.6,179.4 401.3,182.2 401.5,185.9 404.1,189.6 400.5,189.5 399.6,190.9 399.9,193.9 402.0,195.8 400.6,198.1 397.5,195.3 394.2,194.2 392.6,194.6 391.9,193.7 388.8,194.2 388.1,191.2 388.2,187.3 384.9,186.8 383.2,188.6 379.7,188.6 379.0,184.9 372.7,184.9Z"/>
<path fill="#f5f9f5" d="M369.4,181.4 371.0,183.3 372.7,182.6 375.1,183.1 377.8,181.4 378.3,178.4 380.9,175.4 381.4,171.0 382.5,168.3 379.2,168.3 378.3,171.5 373.0,170.6 374.3,172.4 375.3,175.6 375.1,177.8 371.8,178.5 371.0,178.7Z"/>
<path fill="#d9ebdc" d="M366.2,172.7 369.7,172.7 369.7,170.5 373.0,170.6 374.3,172.4 375.3,175.6 375.1,177.8 371.8,178.5 371.0,178.7 369.4,181.4 366.8,178.7 365.4,175.7Z"/>
<path fill="#f5f9f5" d="M366.2,172.7 367.1,170.5 369.7,170.5 369.7,172.7Z"/>
<path fill="#c3e0c8" d="M364.8,166.2 366.9,168.3 367.1,170.5 373.0,170.6 378.1,171.5 376.2,168.3 375.3,164.8 377.1,161.3 374.1,156.9 377.1,156.9 374.8,151.6 373.0,154.3 371.0,159.4 368.3,162.2 366.2,163.2Z"/>
<path fill="#f5f9f5" d="M376.2,168.3 375.3,164.8 377.1,161.3 382.5,160.2 383.2,158.7 386.7,157.4 389.8,155.1 391.0,156.9 392.8,159.0 394.0,161.3 397.8,165.5 392.8,165.5 389.3,167.3 384.0,165.5 382.5,166.8 382.5,168.3 379.2,168.3 378.1,171.5Z"/>
<path fill="#f5f9f5" d="M374.8,151.6 377.1,156.9 374.1,156.9 377.1,161.3 382.5,160.2 383.2,158.7 386.7,157.4 389.8,155.1 389.3,152.0 388.4,150.7 390.2,146.9 391.9,146.9 391.9,140.2 377.9,133.3 374.8,134.7 376.2,137.5 377.1,139.3 377.6,145.5 373.6,149.0 373.7,150.7Z"/>
<path fill="#f5f9f5" d="M350.3,148.1 352.3,147.6 356.1,147.4 357.3,144.9 357.3,140.7 360.5,140.2 363.1,137.9 371.0,133.1 374.8,134.7 376.2,137.5 377.1,139.3 377.6,145.5 373.6,149.0 373.7,150.7 371.8,151.4 368.3,151.1 364.0,151.3 361.3,150.6 357.3,150.6 356.3,153.9 354.9,152.9 353.8,152.3 351.6,150.7Z"/>
<path fill="#9fd1a3" d="M354.7,163.2 354.9,158.7 356.3,153.9 357.3,150.6 361.3,150.6 364.0,151.3 368.3,151.1 371.8,151.4 373.7,150.7 374.8,151.6 373.0,154.3 371.0,159.4 368.3,162.2 366.2,163.2 364.8,166.2 362.2,166.8 360.5,166.9 357.9,163.4Z"/>
<path fill="#d9ebdc" d="M352.8,163.6 354.7,163.2 354.9,158.7 356.3,153.9 354.9,152.9 353.8,152.3 351.6,155.1 352.8,158.7Z"/>
<path fill="#d9ebdc" d="M352.1,163.8 352.8,163.6 352.8,158.7 351.6,155.1 349.8,155.0 350.9,159.5 351.0,162.4Z"/>
<path fill="#c3e0c8" d="M344.6,165.5 346.5,166.1 352.1,163.8 351.0,162.4 350.9,159.5 349.8,155.0 345.1,155.1 345.3,157.8 344.4,162.5Z"/>
<path fill="#d9ebdc" d="M340.4,156.2 345.1,157.4 345.1,155.1 349.8,155.0 351.6,155.1 353.8,152.3 351.6,150.7 350.3,148.1 346.5,149.5 342.7,151.3 340.7,153.7Z"/>
<path fill="#d9ebdc" d="M336.9,166.8 344.6,165.5 344.4,162.5 345.3,157.8 345.1,157.4 340.4,156.2 339.2,155.8 336.0,156.5 335.5,161.1 336.9,164.3Z"/>
<path fill="#f5f9f5" d="M329.9,162.4 336.9,166.8 336.9,164.3 335.5,161.1 333.6,159.7 332.0,159.5Z"/>
<path fill="#f5f9f5" d="M326.8,158.7 329.9,162.4 332.0,159.5 331.3,156.9 328.2,157.1Z"/>
<path fill="#f5f9f5" d="M323.8,155.3 326.8,158.7 328.2,157.1 331.3,156.9 332.0,159.5 333.6,159.7 335.5,161.1 336.0,156.5 335.5,155.1 334.3,152.7 330.1,152.7 326.1,152.3 326.1,153.9Z"/>
<path fill="#f5f9f5" d="M320.8,152.9 323.8,155.3 326.1,153.9 326.1,152.3Z"/>
<path fill="#d9ebdc" d="M320.8,152.9 326.1,152.3 330.1,152.7 328.7,148.6 324.7,145.3 321.2,146.3 319.4,148.6 320.8,150.6Z"/>
<path fill="#f5f9f5" d="M320.1,137.7 321.2,146.3 324.7,145.3 328.7,148.6 329.9,147.2 340.4,147.2 340.7,145.8 338.7,130.5 341.6,130.5 334.8,126.5 334.8,128.7 329.0,128.7 329.0,133.1 327.3,134.0 327.3,137.0Z"/>
<path fill="#d9ebdc" d="M328.7,148.6 330.1,152.7 334.3,152.7 335.5,155.1 336.0,156.5 339.2,155.8 340.4,156.2 340.7,153.7 342.7,151.3 346.5,149.5 350.3,148.1 352.3,147.6 356.1,147.4 357.3,144.9 357.3,140.7 355.8,141.1 352.1,137.4 341.6,130.5 338.7,130.5 340.7,145.8 340.4,147.2 329.9,147.2Z"/>
<path fill="#f5f9f5" d="M371.3,184.9 372.7,184.9 379.0,184.9 379.7,188.6 383.2,188.6 384.9,186.8 388.2,187.3 388.1,191.2 388.8,194.2 391.9,193.7 391.9,197.4 388.4,197.4 388.4,203.0 390.9,205.5 386.7,206.2 382.3,205.1 374.4,205.1 370.6,204.9 371.8,198.3 374.1,193.9 372.7,190.3Z"/>
<path fill="#c3e0c8" d="M388.4,197.4 391.9,197.4 391.9,193.7 392.6,194.6 394.2,194.2 397.5,195.3 400.6,198.1 402.0,195.8 399.9,193.9 399.6,190.9 400.5,189.5 404.1,189.6 407.3,190.9 408.1,193.5 408.1,196.5 407.1,198.4 408.0,199.1 402.7,200.9 403.1,202.0 400.5,202.7 397.1,206.0 394.2,205.8 390.9,205.5 388.4,203.0Z"/>
<path fill="#c3e0c8" d="M407.3,190.9 410.1,191.6 410.6,194.7 410.2,198.3 412.5,200.2 412.5,203.0 411.5,204.4 409.9,201.8 408.0,199.1 407.1,198.4 408.1,196.5 408.1,193.5Z"/>
<path fill="#d9ebdc" d="M420.5,193.0 420.9,200.0 419.0,203.5 414.6,205.8 410.9,209.3 412.0,213.2 411.8,216.7 407.6,219.0 407.4,221.7 405.9,221.7 405.7,219.9 405.9,217.6 404.6,213.9 406.7,212.0 407.6,209.3 407.3,206.2 407.6,203.9 403.1,202.0 402.7,200.9 408.0,199.1 409.9,201.8 411.5,204.4 412.5,203.0 412.5,200.2 410.2,198.3 410.6,194.7 415.5,195.1Z"/>
<path fill="#c3e0c8" d="M394.2,205.8 397.1,206.0 400.5,202.7 403.1,202.0 407.6,203.9 407.3,206.2 407.6,209.3 406.7,212.0 404.6,213.9 401.3,213.6 398.4,210.6 395.7,208.8Z"/>
<path fill="#c3e0c8" d="M384.9,213.2 384.9,218.1 386.3,221.7 389.6,219.4 394.5,219.7 397.1,216.2 401.3,213.6 398.4,210.6 395.7,208.8 394.2,205.8 390.9,205.5 386.7,206.2 386.7,213.2Z"/>
<path fill="#d9ebdc" d="M370.6,204.9 374.4,205.1 382.3,205.1 386.7,206.2 386.7,213.2 384.9,213.2 384.9,218.1 384.9,224.5 380.6,225.0 378.8,224.8 376.2,221.1 375.3,214.1 371.8,207.6Z"/>
<path fill="#5aaa5f" d="M378.8,224.8 380.6,225.0 384.9,224.5 384.9,218.1 386.3,221.7 389.6,219.4 394.5,219.7 397.1,216.2 401.3,213.6 404.6,213.9 405.9,217.6 405.7,219.9 405.9,221.7 407.4,221.7 406.6,224.7 404.1,227.1 402.4,229.6 399.2,232.2 396.3,234.0 394.5,234.3 389.3,234.3 384.9,235.7 382.1,234.7 381.8,232.1 380.2,228.2Z"/>
<path fill="#f5f9f5" d="M397.1,226.6 399.8,225.0 401.3,226.4 399.4,228.4Z"/>
<path fill="#d9ebdc" d="M436.1,195.6 438.2,201.8 437.0,204.4 434.7,210.6 432.4,218.3 428.9,219.4 426.3,216.7 425.6,213.2 427.7,209.3 426.8,204.4 430.3,202.1 433.8,198.3Z"/>
<path fill="#f5f9f5" d="M307.6,144.9 309.0,144.8 308.4,145.6ZM308.4,147.7 309.3,147.7 309.0,148.3ZM306.0,144.4 306.5,144.4 306.4,144.9Z"/>
<path fill="#f5f9f5" d="M425.4,194.6 426.0,194.9 425.6,195.4Z"/>
<path fill="#f5f9f5" d="M450.0,209.9 450.9,210.1 450.4,210.6ZM446.6,211.5 447.4,211.6 446.9,212.0Z"/>
<path fill="#c3e0c8" d="M435.6,92.8 433.8,90.5 431.7,89.5 432.1,89.1 434.7,86.5 439.0,83.7 446.0,85.4 452.1,84.7 456.5,84.7 457.4,79.8 463.5,78.6 470.5,77.2 474.0,77.3 478.3,79.5 484.4,80.3 489.7,85.1 494.9,84.7 498.4,86.5 502.4,88.1 499.3,91.8 494.9,91.4 494.0,94.8 489.7,95.3 490.2,100.2 487.9,99.2 479.2,98.5 478.3,99.9 474.0,99.7 470.5,101.6 468.7,102.7 466.1,102.0 465.2,99.7 458.3,97.9 452.1,94.4 447.8,95.3 447.8,101.8 444.3,100.1 441.7,100.9 441.7,99.2 439.0,96.2 438.2,95.3 442.5,94.8 442.5,92.1 439.0,91.8Z"/>
<path fill="#d9ebdc" d="M447.8,101.8 447.8,95.3 452.1,94.4 458.3,97.9 465.2,99.7 466.1,102.0 468.7,102.7 470.5,101.6 474.0,99.7 477.5,102.7 474.0,103.7 473.1,102.5 470.0,104.1 468.4,105.3 469.3,107.6 467.9,109.0 466.1,108.7 462.6,106.0 458.3,103.2 456.5,102.0 454.8,100.2 452.1,99.5 449.5,101.8Z"/>
<path fill="#f5f9f5" d="M441.7,100.9 444.3,100.1 447.8,101.8 449.5,101.8 452.1,99.5 454.8,100.2 456.5,102.0 458.3,103.2 462.6,106.0 466.1,108.7 462.6,110.6 459.1,112.4 456.9,111.8 456.9,110.1 453.0,108.5 449.5,107.3 444.3,108.9 444.1,105.9 442.5,104.1Z"/>
<path fill="#d9ebdc" d="M472.2,104.1 478.3,105.2 479.2,103.6 484.1,102.3 490.0,100.4 487.9,99.2 479.2,98.5 478.3,99.9 474.0,99.7 477.5,102.7 474.0,103.7Z"/>
<path fill="#f5f9f5" d="M467.9,109.0 469.3,107.6 468.4,105.3 470.0,104.1 473.1,102.5 472.2,104.1 478.3,105.2 481.0,106.7 480.8,108.9 475.7,109.7 474.8,107.8 472.2,108.3 468.7,109.4Z"/>
<path fill="#d9ebdc" d="M412.7,111.3 414.1,109.7 416.3,109.7 419.8,109.7 424.0,109.2 421.9,113.3 417.7,115.9 414.3,117.7 412.5,116.6 412.9,113.6Z"/>
<path fill="#c3e0c8" d="M424.0,109.2 428.2,109.0 430.3,111.5 429.4,114.7 433.5,118.5 433.8,121.7 434.7,121.9 431.2,123.3 428.0,123.1 423.3,119.8 418.4,117.8 417.7,115.9 421.9,113.3Z"/>
<path fill="#5aaa5f" d="M428.2,104.6 430.7,106.0 433.8,104.8 435.4,106.9 437.3,108.7 440.8,109.7 444.3,108.9 449.5,107.3 453.0,108.5 456.9,110.1 456.9,111.8 455.6,114.7 456.2,119.1 457.9,119.2 456.3,122.1 459.6,124.9 460.5,126.6 460.3,127.7 457.6,130.1 451.3,129.4 449.5,127.0 445.2,127.7 441.7,125.9 438.7,123.5 437.3,121.3 434.7,121.9 433.8,121.7 433.5,118.5 429.4,114.7 430.3,111.5 428.2,109.0 427.3,106.9Z"/>
<path fill="#5aaa5f" d="M411.1,122.8 412.9,123.1 415.5,121.7 414.6,119.1 418.4,117.8 423.3,119.8 428.0,123.1 431.2,123.3 432.9,124.3 434.5,124.3 435.6,126.1 437.6,127.5 438.7,130.9 440.1,131.7 441.8,134.2 446.4,134.5 447.3,135.8 446.0,139.3 440.8,141.1 435.6,141.8 434.2,142.5 431.2,144.2 426.8,143.9 425.6,143.7 424.7,145.6 424.2,143.7 421.6,140.2 419.0,137.5 418.1,134.9 416.3,132.3 415.0,130.5 413.7,127.9 411.5,125.2Z"/>
<path fill="#c3e0c8" d="M431.2,123.3 433.8,121.7 434.5,124.3 432.9,124.3Z"/>
<path fill="#9fd1a3" d="M438.7,130.9 439.4,128.6 440.1,130.1 440.1,131.2Z"/>
<path fill="#d9ebdc" d="M424.7,145.6 425.6,143.7 426.8,143.9 431.2,144.2 434.2,142.5 435.6,141.8 440.8,141.1 442.5,145.3 441.1,147.0 435.6,149.9 428.6,152.0 426.0,152.1 425.4,151.1Z"/>
<path fill="#c3e0c8" d="M440.8,141.1 446.0,139.3 447.3,135.8 446.4,134.5 447.8,131.9 448.3,130.7 452.3,133.0 454.4,134.9 452.1,138.6 450.7,141.1 448.6,142.8 446.0,144.6 442.5,145.3Z"/>
<path fill="#c3e0c8" d="M440.1,131.7 441.8,134.2 446.4,134.5 447.8,131.9 448.3,130.7 448.0,128.7 445.2,131.7 444.3,132.1Z"/>
<path fill="#c3e0c8" d="M411.1,122.8 412.9,123.1 415.5,121.7 414.6,119.1 418.4,117.8 417.7,115.9 414.3,117.7 412.5,116.6 412.2,116.9 412.0,119.1Z"/>
<path fill="#5aaa5f" d="M409.9,119.4 410.9,122.6 412.0,119.1 412.2,116.9 412.2,116.1 411.3,116.2Z"/>
<path fill="#c3e0c8" d="M411.3,116.2 412.2,116.1 413.9,114.3 412.9,113.6Z"/>
<path fill="#f5f9f5" d="M456.9,111.8 459.1,112.4 462.6,110.6 466.1,108.7 467.9,109.0 468.7,109.4 472.2,108.3 474.8,107.8 475.7,109.7 480.8,108.9 478.3,109.6 474.3,111.1 474.8,113.8 472.2,115.9 471.0,118.4 466.1,119.9 465.8,121.9 459.1,122.8 456.3,122.1 457.9,119.2 456.2,119.1 455.6,114.7Z"/>
<path fill="#5aaa5f" d="M457.6,130.1 460.3,127.7 460.5,126.6 459.6,124.9 456.3,122.1 459.1,122.8 465.8,121.9 466.1,119.9 471.0,118.4 472.2,115.9 474.8,113.8 474.3,111.1 478.3,109.6 480.8,108.9 481.8,109.7 485.8,112.0 484.1,113.4 479.2,113.4 479.9,116.8 481.5,117.7 480.1,119.9 477.5,121.9 475.5,125.4 472.7,125.2 471.3,127.0 473.6,129.3 474.0,131.6 470.1,131.7 469.1,132.8 467.5,131.0 466.1,129.8 462.6,130.1Z"/>
<path fill="#5aaa5f" d="M469.1,132.8 470.1,131.7 474.0,131.6 473.6,129.3 471.3,127.0 472.7,125.2 475.5,125.4 477.5,121.9 480.1,119.9 481.5,117.7 479.9,116.8 479.2,113.4 484.1,113.4 485.8,112.0 487.9,114.1 487.8,116.4 488.5,117.3 487.4,119.4 491.4,121.3 490.0,123.8 494.9,126.3 498.4,127.5 503.8,128.0 503.8,125.4 505.2,126.5 506.8,127.5 510.6,127.2 510.1,125.6 514.1,123.1 517.6,122.8 519.9,124.7 519.4,126.6 516.2,128.4 515.2,131.0 512.9,132.3 512.7,135.4 511.7,136.0 511.3,133.1 509.8,134.0 509.2,132.3 511.3,130.5 506.8,130.0 506.8,128.7 504.9,128.0 503.8,131.4 505.2,133.7 505.4,136.1 501.9,136.8 501.6,138.4 498.4,140.2 495.4,143.3 493.5,145.5 490.2,146.7 489.9,150.7 489.3,154.3 489.3,156.4 487.9,158.1 486.5,158.8 485.3,160.2 483.6,158.7 482.3,154.3 480.6,151.6 479.7,148.1 478.3,145.5 477.1,141.1 477.1,137.5 476.1,137.2 476.6,135.8 474.0,137.9 470.5,135.3 472.2,134.4Z"/>
<path fill="#9fd1a3" d="M490.0,123.8 491.4,121.3 494.0,121.7 496.7,123.8 500.2,125.2 503.8,125.4 503.8,128.0 498.4,127.5 494.9,126.3Z"/>
<path fill="#f5f9f5" d="M505.2,126.5 506.8,124.9 510.1,125.6 510.6,127.2 506.8,127.5Z"/>
<path fill="#5aaa5f" d="M503.8,131.4 504.9,128.0 506.8,128.7 506.8,130.0 511.3,130.5 509.2,132.3 509.8,134.0 511.3,133.1 511.7,137.0 511.2,138.1 510.3,135.3 508.0,134.9 505.4,136.1 505.2,133.7Z"/>
<path fill="#d9ebdc" d="M489.3,157.6 490.2,157.4 492.8,161.3 492.3,163.2 490.6,164.1 489.5,163.1 489.3,160.4Z"/>
<path fill="#165016" d="M478.5,105.2 479.2,103.6 484.1,102.3 490.0,100.4 490.2,100.2 489.7,95.3 494.0,94.8 494.9,91.4 499.3,91.8 502.4,88.1 503.3,88.1 508.0,92.7 508.9,94.8 516.7,96.7 518.5,99.3 526.3,99.5 533.3,101.3 537.7,99.9 542.9,99.3 545.4,97.6 545.6,95.3 549.0,95.3 553.4,93.0 559.3,92.3 556.9,90.2 552.5,90.4 551.7,89.7 553.8,86.9 555.7,87.4 557.8,86.5 559.5,82.1 560.4,80.9 565.6,80.3 570.0,82.1 572.6,86.9 577.0,88.3 578.4,90.0 581.3,90.5 585.7,89.3 582.2,95.1 579.2,95.7 578.7,98.8 578.2,100.1 577.3,99.0 573.5,100.6 571.6,100.9 567.2,103.9 563.0,105.9 561.8,102.9 558.6,105.0 555.7,105.9 557.6,108.3 560.9,108.0 563.9,108.9 560.4,111.1 558.1,112.9 560.9,116.8 562.8,119.1 562.7,121.7 562.8,122.9 560.4,126.1 558.6,129.4 556.0,131.6 553.4,134.0 549.4,135.3 546.4,136.1 542.9,137.2 542.6,138.8 541.5,136.7 538.6,136.7 536.3,134.4 533.9,133.5 531.2,134.7 528.4,135.1 527.7,137.2 526.5,136.3 524.6,136.5 523.2,135.6 523.4,133.8 520.4,132.3 522.3,128.9 522.2,125.9 519.9,124.7 517.6,122.8 514.1,123.1 510.1,125.6 506.8,124.9 505.2,126.5 503.8,125.4 500.2,125.2 496.7,123.8 494.0,121.7 491.4,121.3 487.4,119.4 488.5,117.3 487.8,116.4 487.9,114.1 485.8,112.0 481.8,109.7 480.8,108.9 481.0,106.7ZM539.8,140.7 541.2,139.1 543.8,139.5 542.6,142.1 540.3,142.3Z"/>
<path fill="#9fd1a3" d="M559.9,134.0 562.1,130.1 563.0,130.5 561.3,135.8Z"/>
<path fill="#d9ebdc" d="M503.3,88.1 510.6,85.1 520.2,86.5 522.0,83.0 528.1,84.0 529.0,86.0 536.8,86.5 543.8,87.7 549.9,86.1 553.8,86.9 551.7,89.7 552.5,90.4 556.9,90.2 559.3,92.3 553.4,93.0 549.0,95.3 545.6,95.3 545.4,97.6 542.9,99.3 537.7,99.9 533.3,101.3 526.3,99.5 518.5,99.3 516.7,96.7 508.9,94.8 508.0,92.7Z"/>
<path fill="#f5f9f5" d="M567.2,103.9 571.6,100.9 573.5,100.6 577.3,99.0 578.2,100.1 576.5,102.3 572.6,104.6 574.0,106.6 571.2,108.0 568.2,108.1 568.8,105.0Z"/>
<path fill="#5aaa5f" d="M571.2,108.0 574.0,106.6 575.9,109.4 575.9,112.0 573.5,113.1 570.9,114.0 570.7,112.0 571.2,109.4ZM570.3,115.7 571.6,115.5 570.9,116.1Z"/>
<path fill="#5aaa5f" d="M578.6,114.7 580.5,113.1 582.2,112.0 587.5,111.7 589.2,108.9 591.8,108.9 593.6,106.7 594.4,104.1 594.4,102.7 596.7,101.6 597.9,105.0 596.2,107.6 595.8,110.3 595.8,111.8 594.1,112.9 592.2,113.4 589.2,113.6 588.9,114.1 587.1,115.5 585.7,113.8 582.2,114.1 580.5,115.0ZM594.4,101.5 595.0,98.5 597.4,94.6 600.6,96.7 603.7,97.9 600.6,100.6 597.1,99.9ZM576.5,116.1 578.7,114.8 580.3,116.8 578.7,119.6 577.3,119.4ZM580.8,115.5 584.0,114.1 584.8,115.2 582.2,116.8Z"/>
<path fill="#f5f9f5" d="M511.2,138.1 511.7,137.0 511.7,136.0 512.7,135.4 512.9,132.3 515.2,131.0 516.2,128.4 519.4,126.6 519.9,124.7 522.2,125.9 522.3,128.9 520.4,132.3 523.4,133.8 523.2,135.6 524.6,136.5 526.5,136.3 524.8,138.6 522.7,139.8 520.2,141.9 521.5,144.6 522.2,146.0 521.5,147.7 523.0,150.7 523.9,153.7 522.2,156.9 521.5,153.4 520.6,149.0 520.4,145.8 518.0,145.5 516.4,146.7 514.6,146.3 515.0,142.8 513.4,140.2Z"/>
<path fill="#9fd1a3" d="M520.2,141.9 522.7,139.8 524.8,138.6 525.5,140.2 526.7,143.7 528.3,142.5 531.6,142.3 533.0,145.5 534.2,147.2 534.2,149.2 529.8,149.5 528.8,150.7 529.7,153.9 527.7,152.1 526.2,150.9 524.6,150.9 524.4,154.3 523.2,156.4 523.2,158.3 525.1,159.9 525.5,161.8 527.7,163.1 528.3,163.6 526.5,164.5 524.9,163.1 524.1,162.4 521.6,160.4 522.2,156.9 523.9,153.7 523.0,150.7 521.5,147.7 522.2,146.0 521.5,144.6Z"/>
<path fill="#d9ebdc" d="M524.8,138.6 526.5,136.3 527.7,137.2 528.4,135.1 529.7,136.3 531.6,137.7 532.6,140.0 531.4,140.5 533.7,141.9 535.9,144.6 537.9,147.6 537.7,148.8 535.1,149.2 534.2,149.2 534.2,147.2 533.0,145.5 531.6,142.3 528.3,142.5 526.7,143.7 525.5,140.2Z"/>
<path fill="#c3e0c8" d="M528.4,135.1 531.2,134.7 533.9,133.5 536.3,134.4 538.6,136.7 536.3,138.2 534.7,141.1 535.9,143.3 537.3,144.9 540.0,147.6 540.8,150.7 540.7,153.9 537.7,156.0 536.5,156.2 533.7,159.2 533.2,156.7 532.5,156.2 535.1,154.3 537.7,152.9 537.7,148.8 537.9,147.6 535.9,144.6 533.7,141.9 531.4,140.5 532.6,140.0 531.6,137.7 529.7,136.3Z"/>
<path fill="#d9ebdc" d="M528.8,150.7 529.8,149.5 534.2,149.2 535.1,149.2 537.7,148.8 537.7,152.9 535.1,154.3 532.5,156.2 530.7,155.8 529.7,153.9Z"/>
<path fill="#5aaa5f" d="M524.9,163.1 526.5,164.5 528.3,163.6 530.5,166.1 530.7,169.6 531.9,172.0 530.7,172.2 526.9,169.4 525.8,167.1 525.1,164.8ZM541.4,171.2 542.9,172.9 545.9,172.0 548.9,172.2 550.4,170.5 551.8,167.1 555.2,167.1 556.0,166.9 558.1,165.2 555.5,163.2 553.9,162.4 551.7,164.8 549.0,166.6 547.3,168.9 544.3,170.1Z"/>
<path fill="#c3e0c8" d="M540.3,174.0 540.3,171.9 541.4,171.2 542.9,172.9 545.9,172.0 548.9,172.2 550.4,170.5 551.8,167.1 555.2,167.1 556.0,166.9 555.3,168.3 556.0,170.6 557.8,172.7 555.7,173.1 555.2,175.9 553.4,177.1 553.4,179.8 552.5,181.2 550.1,181.5 547.3,180.1 545.0,180.3 542.4,179.6 542.1,177.1 540.3,175.4ZM516.4,164.6 520.2,165.3 522.3,167.8 525.1,170.1 527.6,171.3 530.5,173.6 532.5,177.7 535.1,179.8 534.9,184.7 532.6,184.9 528.6,181.5 526.3,178.9 523.2,174.1 519.7,169.6ZM533.7,186.5 536.3,185.1 539.4,185.9 543.5,185.8 546.8,186.6 549.9,188.1 549.7,189.8 543.8,189.1 538.6,188.2 535.8,187.5ZM559.5,172.2 563.0,172.7 567.9,171.7 568.6,172.0 565.3,173.8 560.9,173.8 559.5,175.9 561.8,176.3 565.3,176.1 563.0,178.0 562.1,179.4 564.8,182.4 563.5,184.0 561.8,181.5 560.2,179.8 560.2,184.4 558.6,184.2 558.6,180.7 557.4,179.4 559.0,174.9 559.2,173.1ZM550.8,189.3 554.3,189.1 557.8,189.5 564.8,189.3 559.5,190.2 554.3,190.3 550.8,190.0Z"/>
<path fill="#c3e0c8" stroke-width="2.2" d="M565.6,192.6 568.2,190.7 568.2,191.7ZM557.8,191.2 560.9,191.6 559.5,192.5ZM572.6,171.3 573.5,170.6 574.7,172.7 573.5,175.9 572.6,173.6ZM570.0,180.1 572.1,180.1 571.7,181.2 570.0,180.8ZM573.5,179.6 577.9,179.8 578.4,180.8 574.4,180.7ZM584.3,184.7 585.4,185.1 584.7,186.5ZM578.7,187.7 579.9,187.2 579.8,188.6ZM578.7,175.9 581.3,175.2 584.0,175.9 584.5,178.9 586.6,180.3 589.2,178.0 590.9,177.3 596.2,179.1 596.2,190.5 592.7,188.8 590.6,189.3 592.3,186.8 590.9,184.2 586.6,182.2 583.1,181.2 581.9,181.7 580.5,179.6 583.1,178.7 580.5,178.0ZM534.2,177.7 535.9,177.5 535.9,179.8 535.1,179.4ZM537.9,179.1 539.1,179.4 538.2,180.1ZM519.4,172.0 520.9,173.4 520.1,172.7ZM522.2,176.3 523.4,177.7 522.7,177.3Z"/>
<path fill="#f5f9f5" d="M568.2,190.7 571.7,189.3 572.1,189.8 568.2,191.7Z"/>
<path fill="#f5f9f5" d="M549.0,166.6 550.8,165.7 551.3,166.8 550.1,167.3Z"/>
<path fill="#d9ebdc" d="M596.2,179.1 602.3,181.2 604.9,184.2 607.5,185.1 607.0,186.5 609.3,188.6 612.8,192.6 610.2,192.5 606.7,191.2 604.9,188.9 602.3,187.9 600.6,189.1 598.8,190.7 596.2,190.5ZM609.3,184.4 611.9,184.2 615.4,181.9 615.7,183.3 612.8,185.4ZM613.3,179.1 616.8,181.5 617.1,182.6 615.4,180.8ZM620.1,184.2 622.0,185.9 621.2,186.3Z"/>
<path fill="#c3e0c8" d="M560.4,141.9 563.4,141.9 563.4,145.5 562.1,148.1 566.2,150.7 566.5,152.3 563.9,150.7 560.9,150.2 559.9,148.5 559.3,145.8ZM563.0,162.2 565.6,159.4 569.1,157.3 570.9,161.3 569.1,164.3 566.5,163.1Z"/>
<path fill="#c3e0c8" stroke-width="2.2" d="M563.0,153.7 565.6,154.3 569.1,152.5 569.1,156.4 564.8,158.1 563.0,156.0ZM554.8,159.9 558.6,154.8 559.2,155.5 555.7,160.1ZM560.4,150.7 562.1,150.9 561.6,152.9Z"/>
<path fill="#5aaa5f" d="M403.8,52.0 407.6,52.4 412.9,52.9 419.8,55.2 421.6,56.9 419.8,58.0 416.3,58.2 408.5,57.1 410.8,61.0 414.6,62.0 415.5,60.5 419.8,60.8 420.7,59.2 424.2,57.6 426.8,58.0 426.0,53.9 430.3,54.8 431.2,56.8 437.3,54.8 444.3,54.3 449.5,53.8 454.8,53.4 455.6,51.7 461.7,52.4 467.0,53.4 469.6,54.5 470.5,53.1 467.0,51.8 466.5,49.9 470.5,45.7 476.6,46.5 476.6,53.1 478.3,56.6 480.1,53.9 479.2,49.5 481.0,46.9 486.2,47.8 490.6,46.9 490.6,45.0 500.2,44.6 501.9,42.5 510.6,41.1 521.1,40.2 531.6,37.7 536.8,39.5 545.6,40.0 548.2,41.1 542.1,44.3 547.3,44.8 557.8,46.0 566.5,44.8 571.7,45.3 576.1,49.5 582.2,48.7 589.2,48.8 594.4,46.9 604.9,47.3 611.9,48.7 617.1,49.7 627.6,50.4 629.4,51.8 638.1,52.2 646.8,51.5 648.6,53.1 657.3,51.7 664.3,53.1 664.3,60.1 661.7,61.0 659.9,64.5 653.8,65.7 647.7,68.9 639.8,69.3 635.5,72.4 633.7,72.8 634.6,75.9 632.9,78.1 629.4,81.2 626.7,83.0 623.6,84.7 622.4,81.2 621.5,76.8 622.4,74.2 627.6,71.5 632.0,68.0 636.3,64.5 629.4,65.7 624.1,66.1 620.6,69.8 615.4,70.7 610.2,69.6 599.7,70.1 595.3,72.8 590.1,76.8 586.1,78.2 590.1,79.5 595.3,80.9 596.7,82.6 595.3,85.6 595.0,89.1 591.8,92.1 587.5,96.2 582.2,99.2 578.7,99.7 578.2,100.1 578.7,98.8 579.2,95.7 582.2,95.1 585.7,89.3 581.3,90.5 578.4,90.0 577.0,88.3 572.6,86.9 570.0,82.1 565.6,80.3 560.4,80.9 559.5,82.1 557.8,86.5 555.7,87.4 553.8,86.9 549.9,86.1 543.8,87.7 536.8,86.5 529.0,86.0 528.1,84.0 522.0,83.0 520.2,86.5 510.6,85.1 503.6,87.9 502.4,88.1 498.4,86.5 494.9,84.7 489.7,85.1 484.4,80.3 478.3,79.5 474.0,77.3 470.5,77.2 463.5,78.6 457.4,79.8 456.5,84.7 452.1,84.7 446.0,85.4 439.0,83.7 434.7,86.5 432.1,89.1 431.7,89.5 433.8,90.5 435.6,92.8 432.9,94.4 432.1,96.2 432.9,98.8 434.7,100.9 431.2,100.9 428.6,99.3 426.0,99.2 419.8,98.1 417.2,96.5 414.6,95.3 415.5,94.2 416.3,92.1 418.6,91.6 416.7,91.6 419.3,90.4 420.0,87.2 416.3,86.7 412.0,85.8 409.4,82.5 405.5,82.8 404.6,81.0 407.1,80.5 403.8,78.1 404.0,76.6 399.2,75.6 397.8,73.3 398.9,70.0 398.9,69.4 402.4,69.1 399.8,68.0 398.5,68.0 402.4,65.7 405.0,63.8 403.3,61.9 401.9,60.5 402.4,58.9 400.6,56.8 402.4,55.3 399.8,53.9 400.6,52.7ZM439.9,48.7 442.5,45.1 447.8,42.1 456.5,40.2 469.6,39.2 465.2,41.1 454.8,42.9 449.5,45.5 450.4,50.1 444.3,49.9ZM597.9,78.9 599.7,81.2 600.2,84.7 602.3,88.3 599.7,91.8 597.9,93.5 597.9,90.0 597.9,86.5 597.6,83.0ZM515.9,36.5 521.1,34.9 526.3,35.1 533.3,36.5 524.6,37.4ZM590.1,42.0 596.2,41.1 604.9,42.1 599.7,42.9 590.9,43.0ZM660.8,49.2 664.3,48.7 664.3,49.9 661.7,49.9ZM35.7,53.1 42.7,55.2 49.7,56.6 53.5,58.3 48.8,61.2 44.4,60.5 39.2,59.2 35.7,60.1ZM384.2,78.8 389.8,78.8 389.6,77.7 387.0,77.2 384.7,77.9ZM621.5,85.8 622.7,85.1 622.0,86.1Z"/>
<path fill="#5aaa5f" d="M358.7,71.5 362.2,72.4 364.8,71.9 368.3,70.3 370.1,70.7 371.8,68.0 371.3,66.3 371.3,63.6 374.4,61.0 375.3,58.3 378.8,54.8 381.4,53.9 384.9,53.1 385.8,53.0 391.0,53.4 393.6,53.1 395.4,51.7 398.9,51.3 400.6,52.7 403.8,52.0 404.1,50.8 399.8,49.5 394.5,49.4 388.4,50.8 383.2,51.7 377.9,53.4 375.3,55.7 372.7,58.0 370.1,60.5 366.6,62.7 362.2,64.0 358.7,65.4 358.7,68.0Z"/>
<path fill="#5aaa5f" d="M369.7,70.8 370.1,70.7 371.8,68.0 371.3,66.3 371.3,63.6 374.4,61.0 375.3,58.3 378.8,54.8 381.4,53.9 384.9,53.1 385.8,53.0 391.0,55.0 391.4,57.5 392.3,58.7 388.4,59.2 387.5,61.0 384.0,63.1 380.6,65.4 380.0,67.7 382.8,68.9 382.3,70.3 379.7,71.4 378.8,73.7 377.9,75.6 375.3,75.9 374.8,77.0 372.7,77.0 372.2,75.6 371.0,73.5ZM381.8,74.2 383.2,72.6 382.8,73.8Z"/>
<path fill="#5aaa5f" d="M385.8,53.0 391.0,53.4 393.6,53.1 395.4,51.7 398.9,51.3 400.6,52.7 399.8,53.9 402.4,55.3 400.6,56.8 402.4,58.9 401.9,60.5 403.3,61.9 405.0,63.8 402.4,65.7 398.5,68.0 395.4,68.2 390.2,69.1 387.5,67.8 387.2,65.6 387.0,64.0 389.3,62.4 392.8,60.5 394.2,59.6 392.3,58.7 391.4,57.5 391.0,55.0Z"/>
<path fill="#5aaa5f" d="M364.1,76.6 364.3,74.2 366.6,73.8 368.5,72.9 368.3,75.1 368.9,75.9 367.1,77.2 366.6,78.0 365.0,77.9ZM369.2,76.5 371.8,75.9 371.8,77.2 370.6,78.1 369.2,77.3Z"/>
<path fill="#1b591c" d="M340.0,86.3 343.9,86.0 348.3,85.3 352.3,84.6 352.4,84.0 350.9,83.9 353.0,81.9 350.3,81.2 349.8,80.0 347.7,78.1 347.2,76.8 344.8,75.9 346.5,74.4 346.9,73.1 343.0,72.9 344.6,71.4 341.3,71.4 339.9,73.3 340.4,75.1 339.5,75.9 341.3,77.2 341.3,78.1 343.9,77.9 344.8,79.5 344.8,80.5 342.1,80.7 342.7,82.1 340.9,83.3 344.4,84.0 342.5,84.6ZM339.2,79.4 340.4,78.6 339.2,77.3 336.9,77.5 336.0,78.6 337.3,79.3ZM337.3,73.3 339.2,71.7 339.0,72.9ZM347.4,68.0 348.4,68.4 347.7,69.1ZM344.4,70.5 345.5,70.7 344.8,71.0Z"/>
<path fill="#5aaa5f" d="M332.5,83.5 335.2,83.9 339.0,82.6 339.5,80.7 339.2,79.4 337.3,79.3 336.0,78.6 336.9,77.5 336.9,77.2 335.2,78.4 332.5,79.1 333.4,80.7 332.9,82.5Z"/>
<path fill="#2a6f2b" d="M346.9,98.1 347.9,96.0 347.9,93.5 346.2,91.8 342.1,90.4 341.8,89.1 344.8,88.6 347.4,89.0 346.9,87.0 347.9,87.6 350.3,87.4 352.6,86.3 352.8,84.9 354.4,84.6 355.6,85.3 357.3,86.5 358.4,86.3 360.1,87.4 361.2,87.4 364.3,88.3 363.3,90.7 362.0,91.3 360.7,93.0 362.2,93.7 361.5,95.1 363.3,96.9 363.1,97.4 361.3,98.6 358.7,98.1 357.0,97.9 355.2,98.6 355.6,99.9 353.0,99.7 350.0,99.3ZM365.0,99.9 366.4,98.8 366.6,100.6 366.1,101.6 365.2,101.1Z"/>
<path fill="#2a6f2b" d="M333.9,98.6 336.0,97.6 340.4,97.8 343.9,97.9 346.9,98.1 350.0,99.3 353.0,99.7 355.6,99.9 355.6,100.8 353.8,101.8 351.2,102.7 349.7,104.8 350.3,106.2 349.0,107.6 348.6,108.3 346.5,109.7 342.3,109.9 340.2,111.1 339.0,109.9 337.1,109.0 337.3,106.9 337.8,105.3 337.8,103.7 338.1,102.3 339.2,101.3 338.5,100.7 335.7,100.8 334.5,100.8ZM354.2,104.8 355.9,104.5 355.6,105.3ZM320.5,124.7 321.7,124.3 321.2,125.2ZM322.4,125.0 323.1,125.0 322.8,125.6ZM325.0,124.2 325.9,124.0 325.6,124.9Z"/>
<path fill="#5aaa5f" d="M334.5,100.8 335.7,100.8 338.5,100.7 339.2,101.3 338.1,102.3 337.8,103.7 337.8,105.3 337.3,106.9 337.1,109.0 334.5,109.4 334.6,106.9 333.4,106.2 334.5,103.7Z"/>
<path fill="#165016" d="M362.2,80.2 364.8,80.2 365.0,77.9 366.6,78.0 367.5,78.8 369.2,78.8 371.8,78.8 374.8,79.6 375.1,80.9 375.7,83.0 376.2,84.7 375.0,84.7 371.5,86.0 371.8,87.0 374.1,88.6 372.7,90.9 368.3,91.1 366.8,90.9 363.3,90.7 364.3,88.3 361.2,87.4 360.7,86.3 360.5,85.1 360.5,83.3 361.9,83.0 362.6,80.9Z"/>
<path fill="#2a6f2b" d="M355.9,84.0 357.9,82.6 358.4,81.2 360.5,80.5 362.2,80.2 362.6,80.9 361.9,83.0 360.5,83.3 360.5,85.1 360.0,85.1 358.7,84.0 357.5,84.0Z"/>
<path fill="#2a6f2b" d="M354.4,84.6 355.9,84.0 357.5,84.0 358.7,84.0 360.0,85.1 360.5,85.1 360.7,86.3 360.1,87.4 358.4,86.3 357.3,86.5 355.6,85.3Z"/>
<path fill="#2a6f2b" d="M360.7,93.0 362.2,93.7 364.8,93.5 365.7,93.9 368.3,92.7 368.3,92.0 366.8,90.9 363.3,90.7 362.0,91.3Z"/>
<path fill="#5aaa5f" d="M366.8,90.9 368.3,91.1 372.7,90.9 374.1,88.6 376.2,88.3 379.7,89.0 379.9,90.0 378.3,92.0 375.3,92.8 373.9,92.7 371.7,92.3 368.3,92.0Z"/>
<path fill="#2a6f2b" d="M363.1,97.4 363.3,96.9 361.5,95.1 362.2,93.7 364.8,93.5 365.7,93.9 368.3,92.7 368.3,92.0 371.7,92.3 373.9,92.7 373.9,94.2 371.5,94.8 371.7,96.5 373.7,97.9 374.8,99.9 377.9,100.8 377.9,101.5 382.3,103.9 382.1,104.5 379.7,103.2 379.0,104.6 379.9,105.9 378.8,106.9 377.9,107.8 377.2,107.3 377.9,105.9 377.2,104.1 375.3,103.0 374.1,102.0 371.5,101.1 369.2,99.9 368.3,98.8 367.8,97.2 365.4,96.4 364.0,97.2ZM371.7,107.6 377.2,107.1 376.4,109.9 371.7,108.3ZM364.3,102.3 366.8,102.2 366.8,105.5 364.7,105.9Z"/>
<path fill="#5aaa5f" d="M374.8,79.6 378.8,78.6 382.3,78.2 384.2,78.8 389.8,78.8 391.0,79.6 391.7,81.7 391.2,83.9 391.9,85.1 389.6,87.9 384.9,87.9 382.8,87.4 379.7,85.8 376.2,84.7 375.7,83.0 375.1,80.9Z"/>
<path fill="#9fd1a3" d="M371.5,86.0 375.0,84.7 376.2,84.7 379.7,85.8 382.8,87.4 379.7,89.0 376.2,88.3 374.1,88.6 371.8,87.0Z"/>
<path fill="#c3e0c8" d="M379.7,89.0 382.8,87.4 384.9,87.9 389.3,88.1 388.8,89.3 385.8,89.1 382.8,90.4 379.9,90.0Z"/>
<path fill="#9fd1a3" d="M378.3,92.0 379.9,90.0 382.8,90.4 385.8,89.1 388.8,89.3 390.0,90.0 387.0,93.0 385.3,93.4 382.8,93.7 380.6,93.7 378.5,92.7Z"/>
<path fill="#9fd1a3" d="M385.3,93.4 387.0,93.0 390.0,90.0 393.5,90.5 396.4,89.7 399.1,92.0 399.2,94.4 401.9,94.9 399.9,97.6 397.1,96.9 394.3,97.8 389.6,96.7 389.1,95.8 387.4,95.7Z"/>
<path fill="#c3e0c8" d="M389.1,96.7 389.6,96.7 394.3,97.8 397.1,96.9 399.9,97.6 398.9,100.6 395.9,101.1 394.2,102.0 390.2,101.8 389.1,100.1Z"/>
<path fill="#5aaa5f" d="M384.9,104.6 386.3,102.5 390.2,101.8 394.2,102.0 395.9,101.1 395.4,102.5 391.9,102.9 391.6,104.1 389.5,103.2 390.2,105.9 391.9,107.3 390.5,107.8 390.5,110.3 389.1,110.3 387.9,109.7 387.0,108.0 386.1,106.2ZM391.0,112.0 395.9,112.5 393.3,113.1 391.0,112.5ZM398.5,110.4 399.2,111.0 398.5,111.3Z"/>
<path fill="#9fd1a3" d="M373.9,94.2 373.9,92.7 375.3,92.8 378.3,92.0 378.5,92.7 376.7,94.4Z"/>
<path fill="#9fd1a3" d="M373.9,94.2 376.7,94.4 378.5,92.7 380.6,93.7 382.8,93.7 383.2,95.3 378.8,94.9 377.9,96.7 380.6,98.8 382.3,99.7 379.7,98.8 376.5,96.7 375.0,94.9Z"/>
<path fill="#d9ebdc" d="M377.9,96.7 378.8,94.9 383.2,95.3 384.0,97.1 383.5,97.9 382.3,99.3 380.6,98.8Z"/>
<path fill="#9fd1a3" d="M383.2,95.3 382.8,93.7 385.3,93.4 387.4,95.7 389.1,95.8 389.1,96.7 389.1,100.1 387.5,100.2 385.8,100.6 385.1,99.3 383.5,97.9 384.0,97.1Z"/>
<path fill="#f5f9f5" d="M382.3,99.7 382.3,99.3 383.5,97.9 385.1,99.3 383.9,100.8Z"/>
<path fill="#f5f9f5" d="M383.9,100.8 385.1,99.3 385.8,100.6 386.3,102.5 384.9,104.6 383.9,103.6Z"/>
<path fill="#d9ebdc" d="M385.8,100.6 387.5,100.2 389.1,100.1 390.2,101.8 386.3,102.5Z"/>
<path fill="#c3e0c8" d="M390.9,71.5 391.0,70.3 395.4,69.6 398.9,70.0 397.8,73.3 394.5,72.4 392.4,72.6ZM388.4,71.4 390.2,71.5 388.9,72.4Z"/>
<path fill="#d9ebdc" d="M386.7,74.5 387.5,73.3 389.5,72.9 390.5,74.2 392.4,72.6 394.5,72.4 397.8,73.3 399.2,75.6 396.4,76.5 393.6,75.4 386.7,75.8Z"/>
<path fill="#c3e0c8" d="M386.7,75.8 393.6,75.4 396.4,76.5 394.9,78.9 391.0,79.6 389.8,78.8 389.6,77.7 387.0,77.2Z"/>
<path fill="#d9ebdc" d="M391.0,79.6 394.9,78.9 396.4,76.5 399.2,75.6 404.0,76.6 403.8,78.1 407.1,80.5 404.6,81.0 405.5,82.8 403.3,84.2 397.1,83.7 391.2,83.9 391.7,81.7Z"/>
<path fill="#c3e0c8" d="M388.8,89.3 389.3,88.1 389.6,87.9 391.9,85.1 391.2,83.9 397.1,83.7 403.3,84.2 405.5,82.8 409.4,82.5 412.0,85.8 416.3,86.7 420.0,87.2 419.3,90.4 416.7,91.6 411.1,93.2 413.7,94.6 412.0,95.3 408.5,96.4 406.7,94.6 408.5,93.4 404.1,92.5 401.9,94.9 399.2,94.4 402.4,92.8 398.9,89.3 396.4,89.7 393.5,90.5 390.0,90.0Z"/>
<path fill="#d9ebdc" d="M396.4,89.7 398.9,89.3 402.4,92.8 399.2,94.4 399.1,92.0Z"/>
<path fill="#c3e0c8" d="M308.1,59.2 311.6,57.6 318.6,58.0 323.8,58.0 326.4,60.1 323.8,61.3 317.7,62.9 311.6,62.2 311.6,60.5Z"/>
<path fill="#5aaa5f" d="M395.7,104.1 395.9,101.1 398.9,100.6 400.8,102.0 405.0,101.8 408.5,100.6 411.1,100.6 413.7,101.8 417.2,102.5 422.5,101.5 426.0,102.2 426.3,103.9 428.2,104.6 427.3,106.9 428.2,109.0 424.0,109.2 419.8,109.7 416.3,109.7 414.1,109.7 413.2,111.3 412.9,110.1 409.4,110.8 406.7,111.0 403.4,109.7 401.5,110.8 398.0,109.4 396.1,106.7Z"/>
<path fill="#c3e0c8" d="M406.4,112.9 410.2,111.8 409.4,113.1 406.7,113.6Z"/>
<path fill="#d9ebdc" d="M419.8,98.1 426.0,99.2 428.6,99.3 431.2,100.9 431.0,102.2 428.6,101.8 426.0,102.2 422.5,101.5 422.5,99.7Z"/>
<path fill="#d9ebdc" d="M426.0,102.2 428.6,101.8 431.2,105.0 430.7,106.0 428.2,104.6 426.3,103.9Z"/>
<path fill="#d9ebdc" d="M428.6,101.8 431.0,102.2 431.2,100.9 434.7,100.9 437.8,103.6 436.1,105.3 435.4,106.9 433.8,106.2 433.8,104.8 430.7,106.0 431.2,105.0Z"/>
<path fill="#1b591c" d="M132.3,89.3 135.2,89.7 135.6,88.3 183.8,88.3 184.8,88.8 189.4,89.5 193.7,90.0 195.7,89.5 201.9,92.1 204.2,93.5 206.0,94.8 206.1,98.8 204.9,100.4 206.0,101.1 212.1,99.2 211.9,98.1 215.9,97.8 216.8,96.7 219.2,95.3 225.2,95.3 226.4,94.6 227.4,93.0 229.2,91.1 230.7,91.3 231.6,91.8 231.6,94.1 232.3,94.9 233.0,95.7 230.4,96.5 227.8,97.4 226.6,98.8 226.4,99.7 227.8,100.9 225.7,101.5 221.7,102.5 220.8,103.2 220.4,105.0 219.1,106.0 218.2,107.6 217.3,109.4 217.8,111.1 218.2,112.5 216.4,113.4 214.2,114.7 212.1,115.9 209.4,117.8 208.1,119.9 207.9,121.7 209.3,124.3 210.1,127.3 209.8,130.0 208.6,130.3 207.2,128.7 205.6,125.7 205.4,123.5 203.3,121.7 201.1,122.2 199.0,121.0 196.4,121.2 193.7,121.3 194.3,123.3 192.0,123.1 189.4,122.4 186.2,122.2 184.1,123.1 181.5,124.7 180.1,126.5 180.3,128.9 177.0,128.0 176.3,126.1 174.2,123.3 173.0,122.1 171.0,122.2 169.8,123.5 167.5,122.4 164.2,118.6 161.1,118.6 161.1,119.4 156.2,119.4 149.6,117.3 145.5,117.3 145.2,116.1 143.3,114.7 139.6,113.8 139.3,112.5 137.2,110.1 136.1,108.5 135.2,107.1 133.8,105.0 132.8,103.4 133.3,100.9 132.6,99.2 133.5,96.2 133.5,93.2ZM103.8,52.0 103.8,68.4 107.0,68.7 109.9,70.8 113.4,69.3 117.1,71.7 119.9,74.9 123.0,75.9 123.0,77.7 120.4,77.3 117.8,75.9 115.2,74.2 112.5,72.4 109.9,71.4 106.4,69.4 102.9,68.9 98.6,68.9 95.1,67.5 91.6,68.0 89.0,69.3 85.5,70.3 85.5,68.0 88.1,66.8 84.6,67.5 82.0,69.8 80.8,71.9 76.8,74.2 73.3,75.9 68.9,77.3 65.4,78.2 62.3,78.6 66.3,76.6 69.8,75.9 73.3,74.2 75.0,71.5 72.4,71.2 69.8,71.0 67.1,70.7 67.1,68.9 63.7,68.9 61.4,67.1 60.2,65.4 62.3,63.6 66.3,62.7 68.9,61.9 68.0,61.0 64.5,61.0 59.6,60.8 56.7,59.0 60.2,58.0 64.0,57.3 67.1,57.5 64.5,56.2 61.9,54.3 60.2,53.4 64.5,52.5 68.0,50.8 73.3,49.9 76.8,49.0 81.1,49.7 85.5,50.4 91.6,50.8 96.8,51.3ZM77.8,138.9 79.4,139.8 78.3,141.1 77.6,140.0ZM73.8,136.5 74.7,137.0 74.1,137.2ZM71.2,135.6 71.7,135.6 71.5,136.0ZM76.6,137.5 77.4,137.9 76.9,138.2ZM80.2,73.1 84.1,72.6 82.0,74.2ZM51.4,62.6 54.9,63.3 52.3,63.4Z"/>
<path fill="#2a6f2b" d="M103.8,52.0 107.3,52.2 111.7,53.2 116.0,52.2 121.3,51.3 125.6,50.4 128.3,51.3 131.8,52.2 135.2,51.7 138.7,51.8 145.7,53.2 150.1,54.5 152.7,55.2 157.9,55.0 161.4,55.7 161.4,53.9 166.7,53.9 171.9,55.2 178.0,55.2 179.8,53.9 182.4,54.5 183.3,52.2 181.9,50.4 182.4,48.7 185.0,47.8 187.6,49.5 189.4,51.3 190.2,52.2 192.0,53.9 195.5,54.8 196.4,53.1 200.7,51.8 206.0,51.8 207.7,53.4 206.8,55.2 207.7,56.6 204.2,58.0 200.7,57.5 198.6,58.3 198.1,60.1 195.5,61.5 192.0,62.4 188.5,64.5 185.9,66.3 184.5,68.9 185.0,71.0 187.6,71.5 188.5,73.8 192.0,73.8 196.4,75.1 201.6,76.8 206.0,77.3 206.5,81.2 207.7,82.6 209.4,84.2 211.2,84.2 212.4,82.1 212.1,79.5 210.8,78.1 214.7,76.8 216.1,74.2 213.8,71.2 214.7,68.9 213.8,65.0 218.2,64.9 221.7,65.4 225.2,66.8 228.1,67.1 228.7,69.8 227.8,71.0 231.3,71.5 234.8,71.0 236.9,68.4 238.3,69.8 240.9,72.4 242.6,75.1 245.2,77.2 249.6,78.6 252.2,81.2 252.6,83.0 250.5,83.9 247.0,85.6 242.6,86.1 237.4,86.0 233.9,86.1 230.4,88.3 226.9,91.3 225.7,92.1 228.7,90.4 233.0,88.3 237.4,87.9 237.7,89.0 235.6,90.0 236.9,91.4 237.4,93.0 240.0,93.5 242.6,94.1 245.2,93.0 245.4,93.9 243.5,94.9 239.1,96.0 235.6,97.8 234.4,97.1 236.5,94.9 233.9,94.9 232.3,94.9 231.6,94.1 231.6,91.8 230.7,91.3 229.2,91.1 227.4,93.0 226.4,94.6 225.2,95.3 219.2,95.3 216.8,96.7 215.9,97.8 211.9,98.1 212.1,99.2 206.0,101.1 204.9,100.4 206.1,98.8 206.0,94.8 204.2,93.5 201.9,92.1 195.7,89.5 193.7,90.0 189.4,89.5 184.8,88.8 183.8,88.3 135.6,88.3 134.9,87.7 132.1,86.0 128.3,84.7 126.9,82.6 124.8,80.3 122.5,78.6 123.0,77.7 123.0,75.9 119.9,74.9 117.1,71.7 113.4,69.3 109.9,70.8 107.0,68.7 103.8,68.4ZM134.4,89.3 130.9,88.4 126.2,85.4 128.3,85.1 131.8,86.5 134.4,88.3ZM119.9,80.9 117.8,79.3 119.9,79.5 120.9,82.5ZM246.5,90.7 247.9,89.1 249.6,85.6 251.4,83.9 253.1,83.9 252.2,86.5 254.8,87.4 257.5,89.1 258.0,90.9 256.6,92.3 253.1,92.0 252.2,90.9ZM238.3,86.7 241.7,87.4 242.1,88.1 238.3,87.6ZM237.9,92.1 241.7,92.8 240.9,93.5 238.3,92.8ZM236.5,65.6 231.3,64.9 225.2,63.3 219.9,61.3 213.8,61.2 214.7,59.6 220.8,60.5 222.0,58.3 221.7,55.7 219.1,53.9 213.8,52.2 212.1,50.8 203.3,51.3 196.4,50.4 193.7,49.2 193.7,45.1 199.8,44.6 201.6,46.4 206.8,44.8 213.8,45.5 217.3,46.4 224.3,48.5 231.3,50.9 233.0,53.1 238.3,55.7 241.7,56.6 242.6,57.5 239.1,59.2 239.1,60.5 235.6,61.0 237.0,63.6ZM145.7,51.5 142.2,49.0 144.8,46.2 151.0,45.7 161.4,45.7 166.7,46.4 167.5,49.5 172.8,51.7 171.9,53.2 164.9,53.8 159.7,53.4 151.8,53.8 146.6,52.7ZM131.8,48.0 134.4,44.6 139.6,43.4 147.5,45.1 142.2,47.8 138.7,49.0 134.4,49.2ZM198.1,61.9 200.7,58.7 203.3,59.2 208.6,61.9 207.7,62.7 201.6,63.3ZM210.3,64.3 211.2,65.7 209.8,65.9ZM205.1,64.0 207.2,63.8 206.8,64.9ZM210.3,74.2 212.4,75.4 210.7,75.9ZM207.7,80.9 210.3,81.6 208.6,81.9Z"/>
<path fill="#2a6f2b" stroke-width="2.2" d="M192.9,39.9 196.4,36.3 189.4,31.9 201.6,29.7 219.1,28.2 241.7,29.3 238.3,31.4 231.3,33.2 224.3,35.5 217.3,36.3 213.8,39.3 206.8,40.0ZM182.4,39.9 189.4,42.5 196.4,43.2 210.3,43.2 210.3,41.3 199.8,40.7 192.9,40.4ZM181.5,34.1 187.6,31.6 196.4,33.2 198.1,35.5 191.1,36.9 184.1,36.3ZM171.9,46.4 177.1,44.6 179.8,46.0 180.6,48.1 176.3,49.0 171.9,48.1ZM183.3,44.6 187.6,44.1 192.0,45.0 189.4,47.4 184.1,47.4ZM145.7,42.0 151.0,39.9 159.7,39.9 165.8,41.1 164.1,42.9 154.4,43.4 147.5,42.9ZM168.4,39.9 177.1,39.7 179.8,42.1 173.7,42.5 168.4,41.6ZM135.2,40.4 140.5,38.6 147.5,38.3 146.6,40.4 140.5,41.1ZM166.7,35.6 177.1,34.1 178.9,36.3 170.2,37.2ZM174.5,50.9 179.8,51.7 182.4,53.1 178.9,53.9 174.5,52.5Z"/>
<path fill="#d9ebdc" d="M222.5,36.9 231.3,33.7 245.2,30.2 271.4,29.3 292.4,27.4 311.6,29.3 320.3,31.1 329.0,31.1 320.3,33.7 316.8,37.2 317.7,40.7 315.1,43.4 311.6,46.9 311.6,50.4 304.6,53.1 294.1,54.8 287.1,58.7 281.0,59.2 278.4,62.7 274.9,68.0 273.2,69.1 266.2,67.5 262.7,64.5 259.2,61.0 256.6,57.5 257.5,53.9 261.0,52.2 254.8,50.4 254.8,46.9 250.5,43.4 243.5,40.7 233.0,40.7 226.0,38.6Z"/>
<path fill="#9fd1a3" d="M145.5,117.3 149.6,117.3 156.2,119.4 161.1,119.4 161.1,118.6 164.2,118.6 167.5,122.4 169.8,123.5 171.0,122.2 173.0,122.1 174.2,123.3 176.3,126.1 177.0,128.0 180.3,128.9 179.4,132.3 179.2,135.3 180.3,138.1 182.4,141.1 184.5,142.3 187.6,142.1 190.2,141.8 192.0,139.3 192.3,137.5 196.4,136.5 198.4,137.0 197.2,140.2 196.7,142.5 195.8,141.9 194.4,143.2 191.1,143.2 192.0,146.2 190.2,146.3 189.0,148.8 185.9,146.2 182.4,146.9 178.9,146.0 175.4,144.6 171.9,142.8 168.4,141.1 165.8,138.8 166.1,136.7 164.1,133.5 161.4,130.5 159.0,129.3 158.8,127.0 156.2,125.2 154.1,123.5 152.7,119.9 149.7,118.7 149.7,120.8 151.8,123.5 153.6,126.1 156.2,129.6 157.9,132.3 158.8,134.0 157.6,134.0 154.4,130.9 153.9,128.4 151.0,126.6 150.1,124.3 147.8,121.7 146.1,118.5Z"/>
<path fill="#d9ebdc" d="M189.0,148.8 190.2,146.3 192.0,146.2 191.1,143.2 194.4,143.2 194.3,146.5 195.8,146.9 194.3,149.2 192.7,150.2Z"/>
<path fill="#f5f9f5" d="M194.4,143.2 195.8,141.9 196.2,143.7 194.8,146.5 194.3,146.5Z"/>
<path fill="#f5f9f5" d="M195.8,146.9 199.8,146.5 203.3,146.7 204.7,148.1 201.9,148.5 198.6,150.2 197.6,151.6 196.7,150.9 194.3,149.2Z"/>
<path fill="#f5f9f5" d="M192.7,150.2 194.3,149.2 196.7,150.9 196.7,151.3Z"/>
<path fill="#f5f9f5" d="M197.6,151.6 198.6,150.2 201.9,148.5 204.7,148.1 204.2,152.5 203.9,155.1 200.4,155.0Z"/>
<path fill="#d9ebdc" d="M200.4,155.0 203.9,155.1 205.8,157.6 205.3,160.2 203.9,159.4 201.6,156.9Z"/>
<path fill="#d9ebdc" d="M205.3,160.2 205.8,157.6 208.6,159.0 211.2,157.6 215.0,159.2 214.0,161.8 212.9,160.1 210.3,159.9 209.4,161.7 207.4,161.1Z"/>
<path fill="#d9ebdc" d="M201.6,136.1 205.1,134.0 209.4,133.8 215.6,136.5 219.1,138.1 220.4,138.9 214.7,139.5 214.2,138.2 212.1,136.7 206.8,135.1 203.3,135.8Z"/>
<path fill="#f5f9f5" d="M220.1,142.1 222.5,139.5 224.8,139.8 224.8,143.2 223.4,142.5Z"/>
<path fill="#f5f9f5" d="M224.8,139.8 227.8,139.7 230.6,141.8 227.8,142.3 224.8,143.2Z"/>
<path fill="#f5f9f5" d="M213.3,142.1 216.8,142.5 215.2,143.2Z"/>
<path fill="#f5f9f5" d="M232.7,141.9 235.5,142.1 234.8,142.9 232.7,142.8Z"/>
<path fill="#f5f9f5" d="M213.8,127.5 215.6,127.9 214.7,128.4ZM213.3,130.5 214.3,131.9 213.5,131.7ZM217.3,131.4 218.5,132.4 217.8,132.6Z"/>
<path fill="#f5f9f5" d="M242.1,155.5 243.7,155.7 243.1,156.7Z"/>
<path fill="#2a6f2b" d="M548.2,213.2 549.4,212.9 553.9,210.6 557.8,209.7 562.1,207.9 563.5,205.3 565.6,204.9 567.4,203.2 570.0,199.5 573.5,200.5 576.1,200.5 577.0,197.4 578.4,196.3 581.3,194.6 585.7,196.0 588.9,195.6 587.5,198.3 586.6,200.9 590.1,202.7 593.6,205.3 595.8,205.3 597.2,200.9 597.2,197.0 598.8,193.5 600.6,197.0 601.1,199.8 603.7,200.9 604.9,204.4 605.3,207.8 609.3,210.1 611.4,213.7 613.3,215.9 616.8,219.0 617.5,222.0 618.2,225.2 617.1,229.1 615.7,232.1 614.0,234.3 612.2,237.9 611.9,240.5 608.4,241.2 605.6,243.3 602.8,241.7 600.6,242.8 596.2,241.6 594.1,239.6 593.6,237.5 591.3,237.2 590.9,232.6 589.2,234.3 587.1,235.7 585.7,233.5 584.0,232.1 579.1,229.9 575.2,230.3 570.0,231.3 566.5,232.6 565.6,234.2 561.3,234.0 558.6,234.9 556.0,236.1 552.5,235.9 550.8,234.9 552.0,230.8 550.8,227.3 549.4,222.9 547.8,220.3 548.5,216.7ZM602.6,246.1 605.8,246.8 608.9,246.5 608.8,248.4 607.5,250.5 605.8,251.2 603.7,249.3ZM588.7,237.3 590.6,237.3 589.7,237.9ZM577.5,194.7 579.2,194.4 578.4,195.3Z"/>
<path fill="#5aaa5f" d="M651.5,235.0 654.7,237.9 656.4,239.1 657.3,240.7 661.5,240.9 660.4,243.5 659.0,244.0 657.6,246.7 655.9,247.7 655.0,247.2 655.7,244.9 653.5,243.8 655.0,241.4 654.7,239.6 652.1,236.1ZM651.5,245.8 654.3,247.9 652.1,250.2 651.2,251.6 648.9,252.8 648.0,255.3 645.1,256.5 642.5,255.8 640.7,255.1 643.3,252.3 647.7,250.0 649.4,247.9Z"/>
<path fill="#f5f9f5" d="M623.2,186.3 625.0,187.3 624.1,187.5ZM627.6,188.6 630.2,190.0 629.0,189.6ZM629.4,191.0 630.8,191.7 629.7,191.7ZM631.6,192.6 633.2,193.3 632.2,193.2Z"/>
<path fill="#f5f9f5" d="M640.9,200.9 641.9,202.0 641.2,202.0ZM643.5,203.0 644.2,204.4 643.7,204.1Z"/>
<path fill="#f5f9f5" d="M636.3,209.9 639.0,211.5 641.6,213.7 639.8,213.2 637.2,211.1Z"/>
<path fill="#f5f9f5" d="M659.6,205.3 661.8,205.5 660.8,206.5ZM662.2,203.5 664.1,203.0 663.4,204.1Z"/>
<path fill="#f5f9f5" d="M49.2,198.4 50.4,198.4 49.9,199.1ZM88.4,205.3 89.5,205.5 89.0,206.0ZM74.8,200.2 75.7,200.4 75.4,200.9ZM651.9,171.9 652.6,172.2 652.1,172.6ZM236.7,117.5 237.2,117.7 236.9,117.8Z"/>
<path fill="#5aaa5f" d="M259.8,167.1 262.7,171.3 262.7,174.5 266.2,175.7 271.4,177.1 272.7,179.3 276.7,179.4 280.2,179.4 283.7,181.5 285.4,183.1 288.4,183.7 289.2,187.2 288.5,190.3 285.4,193.9 282.8,197.4 281.9,200.9 281.6,205.8 280.5,208.8 278.4,212.9 276.7,215.0 272.3,215.3 269.2,216.7 265.3,219.9 265.1,223.8 262.7,227.3 260.1,229.9 258.3,232.6 256.8,233.8 257.1,232.1 253.1,228.7 249.4,227.7 252.2,224.7 255.7,222.5 256.1,221.1 254.7,219.6 255.2,216.7 253.1,216.6 252.6,213.7 248.7,213.4 248.7,209.7 248.4,209.3 249.6,206.2 248.0,203.2 244.9,203.2 244.4,198.8 241.7,197.4 238.3,196.5 236.0,193.9 236.0,191.7 233.9,191.9 230.4,193.9 228.5,193.9 226.7,193.9 226.7,191.2 223.4,191.2 222.2,191.0 221.0,187.5 222.7,183.7 228.0,181.9 228.8,176.6 227.8,173.6 229.4,173.4 228.1,171.5 233.0,172.4 234.2,173.3 235.6,173.1 238.3,171.9 239.3,170.6 237.9,170.1 238.3,167.5 240.4,168.0 243.5,166.6 244.0,165.3 245.2,165.7 245.4,166.6 245.9,168.3 245.2,169.7 245.8,171.3 247.3,172.4 251.4,171.2 252.4,171.0 254.8,170.5 257.6,170.6ZM261.8,174.7 264.4,174.9 265.3,176.3 262.7,177.3 261.3,176.3Z"/>
<path fill="#9fd1a3" d="M215.0,159.2 218.2,155.8 219.4,155.1 222.5,154.3 224.8,152.7 225.5,153.7 223.4,155.1 222.5,158.3 223.6,159.9 223.6,161.5 227.6,162.2 228.8,163.8 232.1,163.6 231.6,166.6 232.5,168.5 231.6,169.6 233.0,172.4 228.1,171.5 229.4,173.4 227.8,173.6 228.8,176.6 228.0,181.9 226.6,181.2 227.6,179.3 222.7,178.7 220.1,175.6 218.5,174.7 214.7,173.8 212.4,172.0 214.7,167.5 214.9,163.1 214.0,161.8Z"/>
<path fill="#c3e0c8" d="M225.5,153.7 227.8,153.0 230.7,155.8 234.8,155.8 237.4,156.5 241.7,155.7 243.5,157.4 245.2,159.5 243.5,162.2 243.0,163.9 244.0,165.3 243.5,166.6 240.4,168.0 238.3,167.5 237.9,170.1 239.3,170.6 238.3,171.9 235.6,173.1 234.2,173.3 233.0,172.4 231.6,169.6 232.5,168.5 231.6,166.6 232.1,163.6 228.8,163.8 227.6,162.2 223.6,161.5 223.6,159.9 222.5,158.3 223.4,155.1Z"/>
<path fill="#f5f9f5" d="M245.2,159.5 247.9,162.2 250.1,163.9 250.0,165.3 248.7,167.5 249.6,168.7 251.4,171.2 247.3,172.4 245.8,171.3 245.2,169.7 245.9,168.3 245.4,166.6 245.2,165.7 244.0,165.3 243.0,163.9 243.5,162.2Z"/>
<path fill="#f5f9f5" d="M250.1,163.9 255.7,164.3 254.8,165.9 255.4,168.3 254.8,170.5 252.4,171.0 251.4,171.2 249.6,168.7 248.7,167.5 250.0,165.3Z"/>
<path fill="#f5f9f5" d="M255.7,164.3 258.7,165.9 259.8,167.1 257.6,170.6 254.8,170.5 255.4,168.3 254.8,165.9Z"/>
<path fill="#c3e0c8" d="M212.4,172.0 214.7,173.8 218.5,174.7 218.0,177.1 213.3,180.5 212.1,183.3 209.6,182.2 209.8,180.5 210.3,178.9 208.6,178.4 208.9,176.3 210.1,173.1Z"/>
<path fill="#c3e0c8" d="M209.8,180.5 209.6,182.2 212.1,183.3 213.3,180.5 218.0,177.1 218.5,174.7 220.1,175.6 222.7,178.7 227.6,179.3 226.6,181.2 228.0,181.9 222.7,183.7 221.0,187.5 222.2,191.0 223.4,191.2 226.7,191.2 226.7,193.9 228.5,193.9 230.0,196.5 229.5,200.0 228.7,201.8 229.5,203.5 228.5,205.3 227.1,206.7 225.2,204.9 219.1,201.8 216.8,199.0 215.2,195.6 213.5,192.1 211.2,187.7 208.2,185.1 208.1,182.8Z"/>
<path fill="#c3e0c8" d="M228.5,193.9 230.4,193.9 233.9,191.9 236.0,191.7 236.0,193.9 238.3,196.5 241.7,197.4 244.4,198.8 244.9,203.2 248.0,203.2 249.6,206.2 248.4,209.3 246.8,208.5 242.3,209.0 240.7,213.6 237.7,214.6 236.2,213.4 233.0,214.6 231.4,214.6 230.9,212.3 230.0,208.8 228.7,205.3 228.5,205.3 229.5,203.5 228.7,201.8 229.5,200.0 230.0,196.5Z"/>
<path fill="#f5f9f5" d="M240.7,213.6 242.3,209.0 246.8,208.5 248.4,209.3 248.7,209.7 248.7,213.4 252.6,213.7 253.1,216.6 255.2,216.7 254.7,219.6 254.3,221.5 252.6,222.7 247.7,222.5 249.4,219.4 246.1,217.3Z"/>
<path fill="#d9ebdc" d="M249.4,227.7 253.1,228.7 257.1,232.1 256.8,233.8 254.1,235.9 250.5,235.2 248.0,234.2 248.6,230.8Z"/>
<path fill="#9fd1a3" d="M233.0,214.6 236.2,213.4 237.7,214.6 240.7,213.6 246.1,217.3 249.4,219.4 247.7,222.5 252.6,222.7 254.3,221.5 254.7,219.6 256.1,221.1 255.7,222.5 252.2,224.7 249.4,227.7 248.6,230.8 248.0,234.2 250.1,237.0 250.5,238.4 249.4,241.4 245.2,243.0 241.4,243.0 241.2,246.3 236.5,246.7 238.8,249.3 236.0,253.0 232.1,255.5 235.1,257.6 231.8,261.6 229.5,264.3 230.6,266.5 227.8,266.0 224.3,266.0 223.4,263.4 222.0,261.6 224.3,257.2 224.8,253.7 224.6,249.3 226.0,243.1 226.9,238.7 227.8,233.5 228.1,228.2 230.4,222.4 230.7,218.1ZM230.2,267.3 236.2,270.8 233.0,271.7 230.2,271.1Z"/>
<path fill="#9fd1a3" d="M227.1,206.7 228.7,205.3 230.0,208.8 230.9,212.3 231.4,214.6 233.0,214.6 230.7,218.1 230.4,222.4 228.1,228.2 227.8,233.5 226.9,238.7 226.0,243.1 224.6,249.3 224.8,253.7 224.3,257.2 222.0,261.6 223.4,263.4 224.3,266.0 227.8,266.0 230.6,266.5 228.7,267.1 226.0,269.2 222.5,268.7 219.1,264.3 218.2,259.0 219.9,253.7 221.1,248.4 221.7,244.0 222.5,240.0 224.8,232.6 225.2,227.3 226.9,218.5 227.6,211.5Z"/>
<path fill="#9fd1a3" stroke-width="2.2" d="M230.2,267.3 230.2,271.1 233.0,271.7 229.5,271.8 225.2,270.4 226.9,268.8ZM220.3,248.4 221.7,248.4 221.3,250.9 220.1,250.5Z"/>
<path fill="#f5f9f5" d="M190.2,175.0 191.5,175.2 190.8,176.3Z"/>
</g></svg>
<!--/MAP-->
<!--CTRL--><svg class="abs" style="left:10px;top:60px" width="60" height="130" viewBox="255 60 60 130">
<g fill="#0d4a0e"><rect x="271.8" y="69.2" width="18.2" height="53.3" rx="9.1"/><rect x="262.8" y="86.7" width="36.2" height="18.6" rx="9.3"/><rect x="271.8" y="127.6" width="18.2" height="55" rx="9.1"/></g>
<g fill="#fff"><path d="M280.9,72.8L286.3,82H275.5Z"/><path d="M280.9,119.2L286.3,110H275.5Z"/><path d="M266.8,96L276,90.8V101.2Z"/><path d="M295.2,96L286,90.8V101.2Z"/>
<rect x="275.8" y="137.3" width="10.4" height="2.2"/><rect x="279.9" y="133.2" width="2.2" height="10.4"/><rect x="275.8" y="170.6" width="10.4" height="2.2"/></g>
<g fill="none" stroke="#b9c6f2" stroke-width="0.9"><circle cx="280.9" cy="154.4" r="8.2" fill="#22486a"/><ellipse cx="280.9" cy="154.4" rx="4" ry="8.2"/><path d="M272.7,154.4H289.1M280.9,146.2V162.6M274,150H287.8M274,158.8H287.8"/></g>
</svg><!--/CTRL-->
 <div class="abs" style="left:10px;top:392px;font-size:12px;color:#222">0</div>
 <div class="abs" style="left:19px;top:391px;width:141px;height:19.5px;background:linear-gradient(97deg,#fff 2%,#7dbd7d 52%,#045a04)"></div>
 <div class="abs" style="left:99px;top:391px;font-size:12px;color:#1c2e1c">80,708</div>
 <div class="abs hl" style="top:421px;width:715px"></div>
 <div class="abs h" style="left:20px;top:432px">Report View by Selection</div>
 <div class="abs h blue" style="left:623px;top:432px">Customize</div>
 <div class="abs hl" style="top:457px;width:715px"></div>
 <!--TABLE-->
<div class="abs" style="left:0;top:458px;width:710px;height:38px;background:#f5f5f5"></div>
<div class="abs th" style="left:14px;top:461px;">Total:</div>
<div class="abs th" style="left:10.5px;top:477px;">5855</div>
<div class="abs th" style="left:94.4px;top:469px;">Institutions</div>
<div class="abs th" style="left:209px;top:469px;">Countries/Regions</div>
<div class="abs th" style="left:351px;top:461px;">Web of Science</div>
<div class="abs th" style="left:360.5px;top:477px;">Documents</div>
<div class="abs th" style="left:492.8px;top:469px;color:#4a6f96">Cites</div>
<div class="abs" style="left:529.5px;top:474.5px;width:0;height:0;border-left:4.2px solid transparent;border-right:4.2px solid transparent;border-top:4.6px solid #6a92be"></div>
<div class="abs th" style="left:590.9px;top:469px;">Cites/Paper</div>
<div class="abs" id="tb" style="left:0;top:512px;width:710px;height:336px;background:#f3f3f3;overflow:hidden">
<div class="abs" style="left:0;top:4px;width:683px;height:1px;background:#e2e2e2"></div>
<div class="abs row" style="top:5px;height:46px">
<div class="num" style="left:33.5px;top:15.0px">578</div>
<div class="lnk" style="left:79px;top:3.8px">WESTERN<br>SYDNEY<br>UNIVERSITY</div>
<div class="lnk" style="left:218px;top:16.8px">AUSTRALIA</div>
<div class="num" style="right:223.3px;top:15.0px">3,579</div>
<div class="num" style="right:113.3px;top:15.0px">118,859</div>
<div class="num" style="right:-3.3px;top:15.0px">33.21</div>
</div>
<div class="abs row" style="top:51px;height:48px">
<div class="num" style="left:33.5px;top:16.0px">579</div>
<div class="lnk" style="left:79px;top:4.8px">WENZHOU<br>MEDICAL<br>UNIVERSITY</div>
<div class="lnk" style="left:218px;top:11.3px">CHINA<br>MAINLAND</div>
<div class="num" style="right:223.3px;top:16.0px">8,785</div>
<div class="num" style="right:113.3px;top:16.0px">118,609</div>
<div class="num" style="right:-3.3px;top:16.0px">13.50</div>
</div>
<div class="abs row" style="top:99px;height:34px">
<div class="num" style="left:33.5px;top:9.0px">580</div>
<div class="lnk" style="left:79px;top:4.3px">SAINT LOUIS<br>UNIVERSITY</div>
<div class="lnk" style="left:218px;top:10.8px">USA</div>
<div class="num" style="right:223.3px;top:9.0px">4,890</div>
<div class="num" style="right:113.3px;top:9.0px">118,260</div>
<div class="num" style="right:-3.3px;top:9.0px">24.18</div>
</div>
<div class="abs row" style="top:133px;height:34px">
<div class="num" style="left:33.5px;top:9.0px">581</div>
<div class="lnk" style="left:79px;top:4.3px">UNIVERSITI<br>MALAYA</div>
<div class="lnk" style="left:218px;top:10.8px">MALAYSIA</div>
<div class="num" style="right:223.3px;top:9.0px">5,143</div>
<div class="num" style="right:113.3px;top:9.0px">118,173</div>
<div class="num" style="right:-3.3px;top:9.0px">22.98</div>
</div>
<div class="abs row" style="top:167px;height:47px">
<div class="num" style="left:33.5px;top:15.5px">582</div>
<div class="lnk" style="left:79px;top:4.3px">CHONGQING<br>MEDICAL<br>UNIVERSITY</div>
<div class="lnk" style="left:218px;top:10.8px">CHINA<br>MAINLAND</div>
<div class="num" style="right:223.3px;top:15.5px">8,838</div>
<div class="num" style="right:113.3px;top:15.5px">117,685</div>
<div class="num" style="right:-3.3px;top:15.5px">13.32</div>
</div>
<div class="abs row" style="top:214px;height:47px">
<div class="num" style="left:33.5px;top:15.5px">583</div>
<div class="lnk" style="left:79px;top:4.3px">UNIVERSITY OF<br>ROME TOR<br>VERGATA</div>
<div class="lnk" style="left:218px;top:17.3px">ITALY</div>
<div class="num" style="right:223.3px;top:15.5px">6,135</div>
<div class="num" style="right:113.3px;top:15.5px">117,272</div>
<div class="num" style="right:-3.3px;top:15.5px">19.12</div>
</div>
<div class="abs row" style="top:261px;height:34px">
<div class="num" style="left:33.5px;top:9.0px">584</div>
<div class="lnk" style="left:79px;top:4.3px">ASST PAPA<br>GIOVANNI XXIII</div>
<div class="lnk" style="left:218px;top:10.8px">ITALY</div>
<div class="num" style="right:223.3px;top:9.0px">2,194</div>
<div class="num" style="right:113.3px;top:9.0px">116,475</div>
<div class="num" style="right:-3.3px;top:9.0px">53.09</div>
</div>
<div class="abs row" style="top:295px;height:26px">
<div class="num" style="left:33.5px;top:5.0px">585</div>
<div class="lnk" style="left:79px;top:6.8px">INSTITUT CURIE</div>
<div class="lnk" style="left:218px;top:6.8px">FRANCE</div>
<div class="num" style="right:223.3px;top:5.0px">3,793</div>
<div class="num" style="right:113.3px;top:5.0px">116,224</div>
<div class="num" style="right:-3.3px;top:5.0px">30.64</div>
</div>
<div class="abs" style="left:15px;top:47px;width:676px;height:52px;border:4px solid #e8121a"></div>
<div class="abs" style="left:691px;top:0;width:19px;height:318px;background:#f1f1f1"></div>
<div class="abs" style="left:691px;top:45px;width:17px;height:20px;background:#c1c1c1"></div>
<div class="abs" style="left:695px;top:8px;width:0;height:0;border-left:4.5px solid transparent;border-right:4.5px solid transparent;border-bottom:5px solid #505050"></div>
<div class="abs" style="left:695px;top:304px;width:0;height:0;border-left:4.5px solid transparent;border-right:4.5px solid transparent;border-top:5px solid #505050"></div>
<div class="abs" style="left:0;top:318px;width:710px;height:18px;background:#f1f1f1"></div>
<div class="abs" style="left:689px;top:318px;width:21px;height:18px;background:#dcdcdc"></div>
<div class="abs" style="left:21px;top:319px;width:529px;height:17px;background:#c1c1c1"></div>
<div class="abs" style="left:8px;top:323px;width:0;height:0;border-top:4.5px solid transparent;border-bottom:4.5px solid transparent;border-right:5px solid #a3a3a3"></div>
<div class="abs" style="left:676px;top:323px;width:0;height:0;border-top:4.5px solid transparent;border-bottom:4.5px solid transparent;border-left:5px solid #505050"></div>
</div>
<!--/TABLE-->
</div>
<div class="abs" style="right:6px;top:872px;font-style:italic;font-size:12px;color:#1d2a33;white-space:nowrap">InCites Essential Science Indicators dataset updated Mar 09, 2023.</div>
</body></html>
